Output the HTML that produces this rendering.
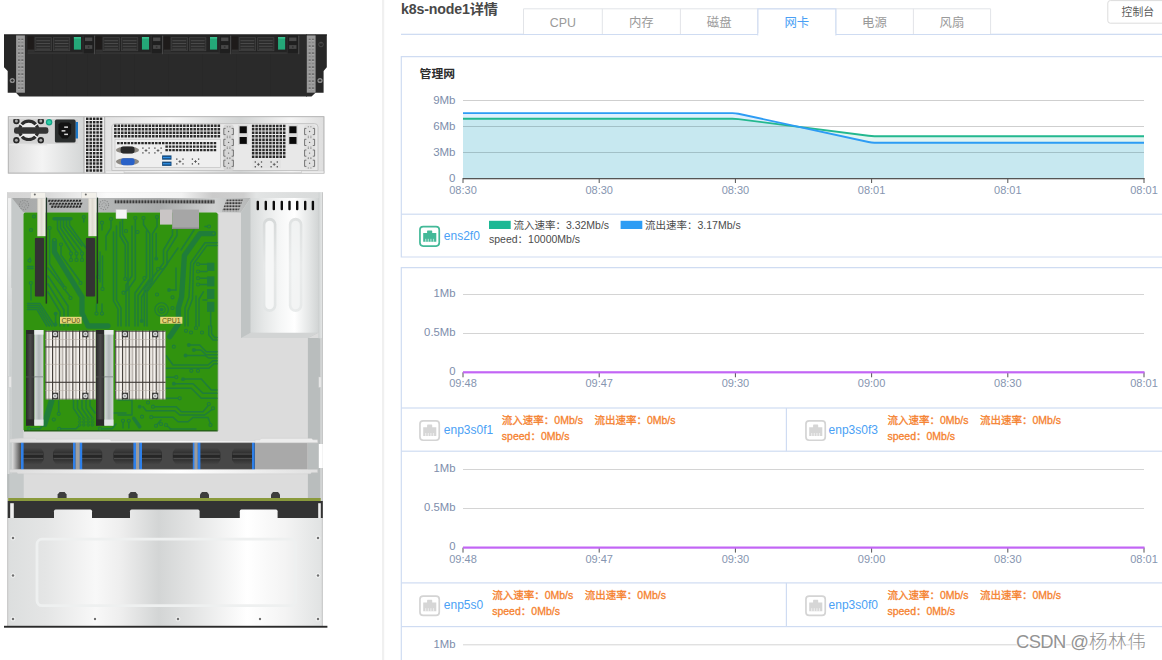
<!DOCTYPE html>
<html lang="zh"><head><meta charset="utf-8"><title>k8s-node1详情</title>
<style>
html,body{margin:0;padding:0;background:#fff}
body{width:1162px;height:660px;overflow:hidden;position:relative;font-family:"Liberation Sans","Noto Sans CJK SC",sans-serif}
.t{position:absolute;white-space:nowrap;line-height:1.2}
.title{font-size:14.2px;font-weight:bold;color:#484848;letter-spacing:-.15px}
.tab{width:78px;text-align:center;font-size:12.4px;color:#9a9a9a;line-height:16px}
.tab.act{color:#4a9ff5}
.btn{font-size:10.8px;color:#5a5a5a;line-height:15px}
.ptitle{font-size:11.8px;font-weight:bold;color:#2c2c2c;line-height:16px}
.nic{font-size:12px;color:#4a9ff5;line-height:16px}
.leg{font-size:10.5px;color:#4c4c4c;line-height:14px}
.org{font-size:10.5px;color:#f5822f;line-height:14px;-webkit-text-stroke:.3px #f5822f}
.wm{font-size:18.4px;font-weight:300;color:#939393;line-height:28px;text-shadow:0 0 1px #fff,0 0 2px #fff,1px 1px 0 #fff,-1px -1px 0 #fff}
</style></head><body>
<svg id="srv" width="384" height="660" viewBox="0 0 384 660" style="position:absolute;left:0;top:0">
<defs>
<linearGradient id="gRear" x1="0" x2="1" y1="0" y2="0"><stop offset="0" stop-color="#dcdcdc"/><stop offset=".45" stop-color="#f4f4f4"/><stop offset="1" stop-color="#d4d6d6"/></linearGradient>
<linearGradient id="gRear2" x1="0" x2="1" y1="0" y2="0"><stop offset="0" stop-color="#e2e2e2"/><stop offset=".3" stop-color="#f6f6f6"/><stop offset=".62" stop-color="#d2d4d4"/><stop offset=".85" stop-color="#f4f4f4"/><stop offset="1" stop-color="#dedede"/></linearGradient>
<linearGradient id="gTopbar" x1="0" x2="1" y1="0" y2="0"><stop offset="0" stop-color="#d4d4d4"/><stop offset=".12" stop-color="#d8d8d8"/><stop offset=".32" stop-color="#fafafa"/><stop offset=".56" stop-color="#f2f2f2"/><stop offset=".66" stop-color="#cacaca"/><stop offset=".76" stop-color="#cecece"/><stop offset=".8" stop-color="#e2e4e4"/><stop offset="1" stop-color="#d8dada"/></linearGradient>
<linearGradient id="gWallL" x1="0" x2="0" y1="0" y2="1"><stop offset="0" stop-color="#f1f1f1"/><stop offset=".2" stop-color="#e6e8e8"/><stop offset=".35" stop-color="#d8dada"/><stop offset=".55" stop-color="#ccd0d0"/><stop offset="1" stop-color="#c6caca"/></linearGradient>
<linearGradient id="gWallR" x1="0" x2="1" y1="0" y2="0"><stop offset="0" stop-color="#cbcfcf"/><stop offset=".7" stop-color="#e2e4e4"/><stop offset="1" stop-color="#d4d6d6"/></linearGradient>
<linearGradient id="gBack" x1="0" x2="1" y1="0" y2="0"><stop offset="0" stop-color="#a4a6a6"/><stop offset=".3" stop-color="#b8baba"/><stop offset=".62" stop-color="#a8aaaa"/><stop offset=".85" stop-color="#cfd1d1"/><stop offset="1" stop-color="#b4b6b6"/></linearGradient>
<linearGradient id="gPsu" x1="0" x2="1" y1="0" y2="0"><stop offset="0" stop-color="#d6d9d9"/><stop offset=".2" stop-color="#e6e8e8"/><stop offset=".45" stop-color="#f6f7f7"/><stop offset=".65" stop-color="#ffffff"/><stop offset=".85" stop-color="#e6e8e8"/><stop offset="1" stop-color="#d2d5d5"/></linearGradient>
<linearGradient id="gCover" gradientUnits="userSpaceOnUse" x1="7.3" x2="322.7" y1="0" y2="0"><stop offset="0" stop-color="#dcdede"/><stop offset=".12" stop-color="#e4e5e5"/><stop offset=".28" stop-color="#f8f8f8"/><stop offset=".36" stop-color="#eeeeee"/><stop offset=".48" stop-color="#d3d5d5"/><stop offset=".58" stop-color="#e2e3e3"/><stop offset=".76" stop-color="#ffffff"/><stop offset=".88" stop-color="#f4f4f4"/><stop offset="1" stop-color="#e0e2e2"/></linearGradient>
<linearGradient id="gFan" x1="0" x2="0" y1="0" y2="1"><stop offset="0" stop-color="#484848"/><stop offset=".5" stop-color="#242424"/><stop offset="1" stop-color="#464646"/></linearGradient>
<linearGradient id="gFanL" x1="0" x2="1" y1="0" y2="0"><stop offset="0" stop-color="#e0e0e0"/><stop offset="1" stop-color="#3a3a3a"/></linearGradient>
<linearGradient id="gRail" x1="0" x2="1" y1="0" y2="0"><stop offset="0" stop-color="#dcdcdc"/><stop offset=".3" stop-color="#f0f0f0"/><stop offset=".55" stop-color="#ffffff"/><stop offset="1" stop-color="#e0e0e0"/></linearGradient>
<linearGradient id="gBrk" x1="0" x2="1" y1="0" y2="0"><stop offset="0" stop-color="#f4f2ea"/><stop offset=".5" stop-color="#dedad0"/><stop offset="1" stop-color="#f4f2ea"/></linearGradient>
<linearGradient id="gDimm" x1="0" x2="1" y1="0" y2="0"><stop offset="0" stop-color="#d8dcdc"/><stop offset=".5" stop-color="#aeb6b6"/><stop offset="1" stop-color="#d0d4d4"/></linearGradient>
<linearGradient id="gDimmB" x1="0" x2="1" y1="0" y2="0"><stop offset="0" stop-color="#2a2a2a"/><stop offset=".5" stop-color="#4a4a4a"/><stop offset="1" stop-color="#2e2e2e"/></linearGradient>
<linearGradient id="gU" x1="0" x2="0" y1="0" y2="1"><stop offset="0" stop-color="#d6d9d9"/><stop offset=".5" stop-color="#e6e8e8"/><stop offset="1" stop-color="#e2e5e5"/></linearGradient>
<pattern id="pVent" width="3.05" height="3.3" patternUnits="userSpaceOnUse"><rect width="3.05" height="3.3" fill="#c8c8c8"/><rect x=".4" y=".5" width="2.2" height="2.2" fill="#2e2e2e"/></pattern>
<pattern id="pVent2" width="2.9" height="3.15" patternUnits="userSpaceOnUse"><rect width="2.9" height="3.15" fill="#d2d2d2"/><rect x=".35" y=".45" width="2.1" height="2.1" fill="#333"/></pattern>
<pattern id="pHole" width="3.4" height="7" patternUnits="userSpaceOnUse" patternTransform="translate(17.1 38.6)"><rect width="3.4" height="7" fill="#9b9b9b"/><rect x=".9" y=".2" width="2" height="1.2" fill="#2e2e2e"/><rect x=".9" y="1.4" width="2" height=".9" fill="#d2d2d2"/><rect x=".9" y="3.3" width="2" height="1.3" fill="#6c6c6c"/><rect x=".9" y="4.6" width="2" height=".6" fill="#b8b8b8"/></pattern><pattern id="pHoleR" width="3.4" height="7" patternUnits="userSpaceOnUse" patternTransform="translate(307.8 38.6)"><rect width="3.4" height="7" fill="#9b9b9b"/><rect x=".9" y=".2" width="2" height="1.2" fill="#2e2e2e"/><rect x=".9" y="1.4" width="2" height=".9" fill="#d2d2d2"/><rect x=".9" y="3.3" width="2" height="1.3" fill="#6c6c6c"/><rect x=".9" y="4.6" width="2" height=".6" fill="#b8b8b8"/></pattern>
<pattern id="pFin" width="6.75" height="10" patternUnits="userSpaceOnUse" patternTransform="translate(45.3 0)"><rect width="6.75" height="10" fill="#f5f2ee"/><rect x="0" y="0" width="1.05" height="10" fill="#3e3a36"/><rect x="1.05" y="0" width=".6" height="10" fill="#d4cec6"/><rect x="3.25" y="0" width="1" height="10" fill="#88827a"/><rect x="4.25" y="0" width=".5" height="10" fill="#dcd6cf"/></pattern><pattern id="pFin2" width="6.75" height="10" patternUnits="userSpaceOnUse" patternTransform="translate(115.2 0)"><rect width="6.75" height="10" fill="#f5f2ee"/><rect x="0" y="0" width="1.05" height="10" fill="#3e3a36"/><rect x="1.05" y="0" width=".6" height="10" fill="#d4cec6"/><rect x="3.25" y="0" width="1" height="10" fill="#88827a"/><rect x="4.25" y="0" width=".5" height="10" fill="#dcd6cf"/></pattern>
<pattern id="pSlot" width="3" height="4" patternUnits="userSpaceOnUse"><rect width="3" height="4" fill="#aaacac"/><rect x=".4" y=".3" width="2" height="3" fill="#3a3a3a"/></pattern>
</defs>
<g id="front">
<path d="M4 34.5H16V92.7H7.7V71L4 67.3Z" fill="#272727"/>
<path d="M326.8 34.5H315V92.7H323.6V71L326.8 67.3Z" fill="#272727"/>
<path d="M24.8 34.5H307V96.4H19.5L16 92.7V34.5Z" fill="#2a2a2a"/>
<path d="M306 34.5H315.5V92.7L311.5 96.4H306Z" fill="#2a2a2a"/>
<rect x="16.1" y="34.6" width="8.8" height="58.1" fill="#9b9b9b" />
<rect x="306.8" y="34.6" width="8.8" height="58.1" fill="#9b9b9b" />
<rect x="17.1" y="38.6" width="6.8" height="52.5" fill="url(#pHole)" />
<rect x="307.8" y="38.6" width="6.8" height="52.5" fill="url(#pHoleR)" />
<rect x="4" y="34.5" width="323" height="0.9" fill="#1c1c1c" />
<circle cx="12.3" cy="80.5" r="2.6" fill="#8a8a8a"/><path d="M10.9 80.5h2.8M12.3 79.1v2.8" stroke="#222" stroke-width=".8"/>
<circle cx="320" cy="80.5" r="2.6" fill="#8a8a8a"/><path d="M318.6 80.5h2.8M320 79.1v2.8" stroke="#222" stroke-width=".8"/>
<circle cx="321" cy="44.5" r="2.3" fill="none" stroke="#555" stroke-width=".7"/><path d="M321 41.8v2.4" stroke="#555" stroke-width=".7"/>
<rect x="52" y="54" width="0.6" height="42" fill="#282828" />
<rect x="66" y="54" width="0.6" height="42" fill="#282828" />
<rect x="87" y="54" width="0.6" height="42" fill="#282828" />
<rect x="100" y="54" width="0.6" height="42" fill="#282828" />
<rect x="120" y="54" width="0.6" height="42" fill="#282828" />
<rect x="134" y="54" width="0.6" height="42" fill="#282828" />
<rect x="168" y="54" width="0.6" height="42" fill="#282828" />
<rect x="202" y="54" width="0.6" height="42" fill="#282828" />
<rect x="236" y="54" width="0.6" height="42" fill="#282828" />
<rect x="270" y="54" width="0.6" height="42" fill="#282828" />
<rect x="27.5" y="35.6" width="66.8" height="18" fill="#232323" />
<rect x="27.5" y="52.4" width="66.8" height="1.3" fill="#3a3a3a" />
<rect x="94.1" y="35.6" width="1" height="18.6" fill="#4c4c4c" />
<rect x="27.5" y="36.4" width="6.2" height="13.6" fill="#1e1b1a" />
<rect x="27.8" y="49.6" width="7" height="2.2" fill="#333" />
<rect x="34.7" y="37.2" width="17" height="14.3" fill="#2b2b2b" />
<rect x="35.1" y="37.6" width="16.2" height="13" fill="none" stroke="#404040" stroke-width=".8"/>
<rect x="36.3" y="40.2" width="13.8" height="1" fill="#4a4a4a" />
<rect x="36.3" y="43" width="13.8" height="1" fill="#4a4a4a" />
<rect x="36.3" y="45.8" width="13.8" height="1" fill="#4a4a4a" />
<rect x="36.3" y="48.6" width="13.8" height="1" fill="#4a4a4a" />
<rect x="53.1" y="37.2" width="17" height="14.3" fill="#2b2b2b" />
<rect x="53.5" y="37.6" width="16.2" height="13" fill="none" stroke="#404040" stroke-width=".8"/>
<rect x="54.7" y="40.2" width="13.8" height="1" fill="#4a4a4a" />
<rect x="54.7" y="43" width="13.8" height="1" fill="#4a4a4a" />
<rect x="54.7" y="45.8" width="13.8" height="1" fill="#4a4a4a" />
<rect x="54.7" y="48.6" width="13.8" height="1" fill="#4a4a4a" />
<rect x="73.9" y="37" width="7.1" height="12.6" fill="#24a878" />
<rect x="73.9" y="37" width="7.1" height="1.6" fill="#3cc090" />
<rect x="83.8" y="35.6" width="9.9" height="17.8" fill="#1f1f1f" />
<rect x="85" y="37.5" width="7.3" height="3.6" fill="#4a4a4a" />
<rect x="85" y="45.1" width="7.3" height="3.8" fill="#484848" />
<rect x="87.8" y="46.4" width="1.6" height="1.2" fill="#2a2a2a" />
<rect x="82.5" y="35.6" width="1.2" height="17.8" fill="#2c2c2c" />
<rect x="95.55" y="35.6" width="66.8" height="18" fill="#232323" />
<rect x="95.55" y="52.4" width="66.8" height="1.3" fill="#3a3a3a" />
<rect x="162.15" y="35.6" width="1" height="18.6" fill="#4c4c4c" />
<rect x="95.55" y="36.4" width="6.2" height="13.6" fill="#1e1b1a" />
<rect x="95.85" y="49.6" width="7" height="2.2" fill="#333" />
<rect x="102.75" y="37.2" width="17" height="14.3" fill="#2b2b2b" />
<rect x="103.15" y="37.6" width="16.2" height="13" fill="none" stroke="#404040" stroke-width=".8"/>
<rect x="104.35" y="40.2" width="13.8" height="1" fill="#4a4a4a" />
<rect x="104.35" y="43" width="13.8" height="1" fill="#4a4a4a" />
<rect x="104.35" y="45.8" width="13.8" height="1" fill="#4a4a4a" />
<rect x="104.35" y="48.6" width="13.8" height="1" fill="#4a4a4a" />
<rect x="121.15" y="37.2" width="17" height="14.3" fill="#2b2b2b" />
<rect x="121.55" y="37.6" width="16.2" height="13" fill="none" stroke="#404040" stroke-width=".8"/>
<rect x="122.75" y="40.2" width="13.8" height="1" fill="#4a4a4a" />
<rect x="122.75" y="43" width="13.8" height="1" fill="#4a4a4a" />
<rect x="122.75" y="45.8" width="13.8" height="1" fill="#4a4a4a" />
<rect x="122.75" y="48.6" width="13.8" height="1" fill="#4a4a4a" />
<rect x="141.95" y="37" width="7.1" height="12.6" fill="#24a878" />
<rect x="141.95" y="37" width="7.1" height="1.6" fill="#3cc090" />
<rect x="151.85" y="35.6" width="9.9" height="17.8" fill="#1f1f1f" />
<rect x="153.05" y="37.5" width="7.3" height="3.6" fill="#4a4a4a" />
<rect x="153.05" y="45.1" width="7.3" height="3.8" fill="#484848" />
<rect x="155.85" y="46.4" width="1.6" height="1.2" fill="#2a2a2a" />
<rect x="150.55" y="35.6" width="1.2" height="17.8" fill="#2c2c2c" />
<rect x="163.6" y="35.6" width="66.8" height="18" fill="#232323" />
<rect x="163.6" y="52.4" width="66.8" height="1.3" fill="#3a3a3a" />
<rect x="230.2" y="35.6" width="1" height="18.6" fill="#4c4c4c" />
<rect x="163.6" y="36.4" width="6.2" height="13.6" fill="#1e1b1a" />
<rect x="163.9" y="49.6" width="7" height="2.2" fill="#333" />
<rect x="170.8" y="37.2" width="17" height="14.3" fill="#2b2b2b" />
<rect x="171.2" y="37.6" width="16.2" height="13" fill="none" stroke="#404040" stroke-width=".8"/>
<rect x="172.4" y="40.2" width="13.8" height="1" fill="#4a4a4a" />
<rect x="172.4" y="43" width="13.8" height="1" fill="#4a4a4a" />
<rect x="172.4" y="45.8" width="13.8" height="1" fill="#4a4a4a" />
<rect x="172.4" y="48.6" width="13.8" height="1" fill="#4a4a4a" />
<rect x="189.2" y="37.2" width="17" height="14.3" fill="#2b2b2b" />
<rect x="189.6" y="37.6" width="16.2" height="13" fill="none" stroke="#404040" stroke-width=".8"/>
<rect x="190.8" y="40.2" width="13.8" height="1" fill="#4a4a4a" />
<rect x="190.8" y="43" width="13.8" height="1" fill="#4a4a4a" />
<rect x="190.8" y="45.8" width="13.8" height="1" fill="#4a4a4a" />
<rect x="190.8" y="48.6" width="13.8" height="1" fill="#4a4a4a" />
<rect x="210" y="37" width="7.1" height="12.6" fill="#24a878" />
<rect x="210" y="37" width="7.1" height="1.6" fill="#3cc090" />
<rect x="219.9" y="35.6" width="9.9" height="17.8" fill="#1f1f1f" />
<rect x="221.1" y="37.5" width="7.3" height="3.6" fill="#4a4a4a" />
<rect x="221.1" y="45.1" width="7.3" height="3.8" fill="#484848" />
<rect x="223.9" y="46.4" width="1.6" height="1.2" fill="#2a2a2a" />
<rect x="218.6" y="35.6" width="1.2" height="17.8" fill="#2c2c2c" />
<rect x="231.65" y="35.6" width="66.8" height="18" fill="#232323" />
<rect x="231.65" y="52.4" width="66.8" height="1.3" fill="#3a3a3a" />
<rect x="298.25" y="35.6" width="1" height="18.6" fill="#4c4c4c" />
<rect x="231.65" y="36.4" width="6.2" height="13.6" fill="#1e1b1a" />
<rect x="231.95" y="49.6" width="7" height="2.2" fill="#333" />
<rect x="238.85" y="37.2" width="17" height="14.3" fill="#2b2b2b" />
<rect x="239.25" y="37.6" width="16.2" height="13" fill="none" stroke="#404040" stroke-width=".8"/>
<rect x="240.45" y="40.2" width="13.8" height="1" fill="#4a4a4a" />
<rect x="240.45" y="43" width="13.8" height="1" fill="#4a4a4a" />
<rect x="240.45" y="45.8" width="13.8" height="1" fill="#4a4a4a" />
<rect x="240.45" y="48.6" width="13.8" height="1" fill="#4a4a4a" />
<rect x="257.25" y="37.2" width="17" height="14.3" fill="#2b2b2b" />
<rect x="257.65" y="37.6" width="16.2" height="13" fill="none" stroke="#404040" stroke-width=".8"/>
<rect x="258.85" y="40.2" width="13.8" height="1" fill="#4a4a4a" />
<rect x="258.85" y="43" width="13.8" height="1" fill="#4a4a4a" />
<rect x="258.85" y="45.8" width="13.8" height="1" fill="#4a4a4a" />
<rect x="258.85" y="48.6" width="13.8" height="1" fill="#4a4a4a" />
<rect x="278.05" y="37" width="7.1" height="12.6" fill="#24a878" />
<rect x="278.05" y="37" width="7.1" height="1.6" fill="#3cc090" />
<rect x="287.95" y="35.6" width="9.9" height="17.8" fill="#1f1f1f" />
<rect x="289.15" y="37.5" width="7.3" height="3.6" fill="#4a4a4a" />
<rect x="289.15" y="45.1" width="7.3" height="3.8" fill="#484848" />
<rect x="291.95" y="46.4" width="1.6" height="1.2" fill="#2a2a2a" />
<rect x="286.65" y="35.6" width="1.2" height="17.8" fill="#2c2c2c" />
</g>
<g id="rear">
<rect x="7.9" y="116.3" width="316.4" height="57.2" fill="#c9c9c9" />
<rect x="8.4" y="116.8" width="75" height="56" fill="url(#gRear)" />
<rect x="84.5" y="116.8" width="19.5" height="56" fill="#ececec" />
<path d="M86.00 117.50h2.5v2.5h-2.5zM89.45 117.50h2.5v2.5h-2.5zM92.90 117.50h2.5v2.5h-2.5zM96.35 117.50h2.5v2.5h-2.5zM99.80 117.50h2.5v2.5h-2.5zM86.00 120.95h2.5v2.5h-2.5zM89.45 120.95h2.5v2.5h-2.5zM92.90 120.95h2.5v2.5h-2.5zM96.35 120.95h2.5v2.5h-2.5zM99.80 120.95h2.5v2.5h-2.5zM86.00 124.40h2.5v2.5h-2.5zM89.45 124.40h2.5v2.5h-2.5zM92.90 124.40h2.5v2.5h-2.5zM96.35 124.40h2.5v2.5h-2.5zM99.80 124.40h2.5v2.5h-2.5zM86.00 127.85h2.5v2.5h-2.5zM89.45 127.85h2.5v2.5h-2.5zM92.90 127.85h2.5v2.5h-2.5zM96.35 127.85h2.5v2.5h-2.5zM99.80 127.85h2.5v2.5h-2.5zM86.00 131.30h2.5v2.5h-2.5zM89.45 131.30h2.5v2.5h-2.5zM92.90 131.30h2.5v2.5h-2.5zM96.35 131.30h2.5v2.5h-2.5zM99.80 131.30h2.5v2.5h-2.5zM86.00 134.75h2.5v2.5h-2.5zM89.45 134.75h2.5v2.5h-2.5zM92.90 134.75h2.5v2.5h-2.5zM96.35 134.75h2.5v2.5h-2.5zM99.80 134.75h2.5v2.5h-2.5zM86.00 138.20h2.5v2.5h-2.5zM89.45 138.20h2.5v2.5h-2.5zM92.90 138.20h2.5v2.5h-2.5zM96.35 138.20h2.5v2.5h-2.5zM99.80 138.20h2.5v2.5h-2.5zM86.00 141.65h2.5v2.5h-2.5zM89.45 141.65h2.5v2.5h-2.5zM92.90 141.65h2.5v2.5h-2.5zM96.35 141.65h2.5v2.5h-2.5zM99.80 141.65h2.5v2.5h-2.5zM86.00 145.10h2.5v2.5h-2.5zM89.45 145.10h2.5v2.5h-2.5zM92.90 145.10h2.5v2.5h-2.5zM96.35 145.10h2.5v2.5h-2.5zM99.80 145.10h2.5v2.5h-2.5zM86.00 148.55h2.5v2.5h-2.5zM89.45 148.55h2.5v2.5h-2.5zM92.90 148.55h2.5v2.5h-2.5zM96.35 148.55h2.5v2.5h-2.5zM99.80 148.55h2.5v2.5h-2.5zM86.00 152.00h2.5v2.5h-2.5zM89.45 152.00h2.5v2.5h-2.5zM92.90 152.00h2.5v2.5h-2.5zM96.35 152.00h2.5v2.5h-2.5zM99.80 152.00h2.5v2.5h-2.5zM86.00 155.45h2.5v2.5h-2.5zM89.45 155.45h2.5v2.5h-2.5zM92.90 155.45h2.5v2.5h-2.5zM96.35 155.45h2.5v2.5h-2.5zM99.80 155.45h2.5v2.5h-2.5zM86.00 158.90h2.5v2.5h-2.5zM89.45 158.90h2.5v2.5h-2.5zM92.90 158.90h2.5v2.5h-2.5zM96.35 158.90h2.5v2.5h-2.5zM99.80 158.90h2.5v2.5h-2.5zM86.00 162.35h2.5v2.5h-2.5zM89.45 162.35h2.5v2.5h-2.5zM92.90 162.35h2.5v2.5h-2.5zM96.35 162.35h2.5v2.5h-2.5zM99.80 162.35h2.5v2.5h-2.5zM86.00 165.80h2.5v2.5h-2.5zM89.45 165.80h2.5v2.5h-2.5zM92.90 165.80h2.5v2.5h-2.5zM96.35 165.80h2.5v2.5h-2.5zM99.80 165.80h2.5v2.5h-2.5zM86.00 169.25h2.5v2.5h-2.5zM89.45 169.25h2.5v2.5h-2.5zM92.90 169.25h2.5v2.5h-2.5zM96.35 169.25h2.5v2.5h-2.5zM99.80 169.25h2.5v2.5h-2.5z" fill="#262626"/>
<rect x="105" y="116.8" width="218.8" height="56" fill="url(#gRear2)" />
<rect x="8.3" y="116.7" width="315.6" height="56.4" fill="none" stroke="#b4b4b4" stroke-width=".9"/>
<rect x="83.3" y="116.5" width="1.2" height="56.6" fill="#b8b8b8" />
<rect x="104" y="116.5" width="1.2" height="56.6" fill="#b8b8b8" />
<rect x="9.3" y="118.9" width="68.5" height="24.9" fill="#d3d3d3" />
<circle cx="28.7" cy="130.3" r="9.2" fill="#ececec" stroke="#2c2c2c" stroke-width="3.1"/>
<path d="M16.4 121L41 140.2M41 121L16.4 140.2" stroke="#f4f4f4" stroke-width="1.2"/>
<circle cx="16.4" cy="121" r="3.2" fill="#262626"/><circle cx="16.4" cy="121" r="1.5" fill="#a8a8a8"/>
<circle cx="40.8" cy="121" r="3.2" fill="#262626"/><circle cx="40.8" cy="121" r="1.5" fill="#a8a8a8"/>
<circle cx="16.4" cy="140.2" r="3.2" fill="#262626"/><circle cx="16.4" cy="140.2" r="1.5" fill="#a8a8a8"/>
<circle cx="40.8" cy="140.2" r="3.2" fill="#262626"/><circle cx="40.8" cy="140.2" r="1.5" fill="#a8a8a8"/>
<rect x="9.3" y="116.9" width="38" height="2.2" fill="#e2e2e2" />
<rect x="9.3" y="143.8" width="38" height="1.6" fill="#e6e6e6" />
<rect x="14" y="127.3" width="34.4" height="6.5" rx="2.4" fill="#333"/>
<circle cx="49.1" cy="122.3" r="3.2" fill="#12a084"/><circle cx="49.1" cy="122.3" r="2" fill="#2ecfa6"/>
<rect x="75.4" y="122" width="2.6" height="16.5" fill="#1c78c8" />
<rect x="54.9" y="119.6" width="20.7" height="23" rx="1.6" fill="#2a2d2d"/>
<path d="M60.5 122.4h8.6l2 2v9.6l-3.6 4.6h-5.4l-3.6-4.6v-9.6z" fill="#131313"/>
<rect x="64.2" y="126.4" width="3.8" height="1.5" fill="#d8d8d8" />
<rect x="61.6" y="130.1" width="3.8" height="1.5" fill="#d8d8d8" />
<rect x="64.2" y="133.6" width="3.8" height="1.5" fill="#d8d8d8" />
<path d="M116 123.6H314.5q3.5 0 3.5 3.5V170.5H111.8V127.6q0-4 4.2-4Z" fill="#e8e8e8" stroke="#bdbdbd" stroke-width=".8"/>
<path d="M105.6 173.2V171H124V173.2ZM301.5 173.2V171H323.8V173.2Z" fill="#f2f2f2" stroke="#c4c4c4" stroke-width=".5"/>
<path d="M114.10 124.50h2.5v2.5h-2.5zM117.55 124.50h2.5v2.5h-2.5zM121.00 124.50h2.5v2.5h-2.5zM124.45 124.50h2.5v2.5h-2.5zM127.90 124.50h2.5v2.5h-2.5zM131.35 124.50h2.5v2.5h-2.5zM134.80 124.50h2.5v2.5h-2.5zM138.25 124.50h2.5v2.5h-2.5zM141.70 124.50h2.5v2.5h-2.5zM145.15 124.50h2.5v2.5h-2.5zM148.60 124.50h2.5v2.5h-2.5zM152.05 124.50h2.5v2.5h-2.5zM155.50 124.50h2.5v2.5h-2.5zM158.95 124.50h2.5v2.5h-2.5zM162.40 124.50h2.5v2.5h-2.5zM165.85 124.50h2.5v2.5h-2.5zM169.30 124.50h2.5v2.5h-2.5zM172.75 124.50h2.5v2.5h-2.5zM176.20 124.50h2.5v2.5h-2.5zM179.65 124.50h2.5v2.5h-2.5zM183.10 124.50h2.5v2.5h-2.5zM186.55 124.50h2.5v2.5h-2.5zM190.00 124.50h2.5v2.5h-2.5zM193.45 124.50h2.5v2.5h-2.5zM196.90 124.50h2.5v2.5h-2.5zM200.35 124.50h2.5v2.5h-2.5zM203.80 124.50h2.5v2.5h-2.5zM207.25 124.50h2.5v2.5h-2.5zM210.70 124.50h2.5v2.5h-2.5zM214.15 124.50h2.5v2.5h-2.5zM217.60 124.50h2.5v2.5h-2.5zM114.10 128.00h2.5v2.5h-2.5zM117.55 128.00h2.5v2.5h-2.5zM121.00 128.00h2.5v2.5h-2.5zM124.45 128.00h2.5v2.5h-2.5zM127.90 128.00h2.5v2.5h-2.5zM131.35 128.00h2.5v2.5h-2.5zM134.80 128.00h2.5v2.5h-2.5zM138.25 128.00h2.5v2.5h-2.5zM141.70 128.00h2.5v2.5h-2.5zM145.15 128.00h2.5v2.5h-2.5zM148.60 128.00h2.5v2.5h-2.5zM152.05 128.00h2.5v2.5h-2.5zM155.50 128.00h2.5v2.5h-2.5zM158.95 128.00h2.5v2.5h-2.5zM162.40 128.00h2.5v2.5h-2.5zM165.85 128.00h2.5v2.5h-2.5zM169.30 128.00h2.5v2.5h-2.5zM172.75 128.00h2.5v2.5h-2.5zM176.20 128.00h2.5v2.5h-2.5zM179.65 128.00h2.5v2.5h-2.5zM183.10 128.00h2.5v2.5h-2.5zM186.55 128.00h2.5v2.5h-2.5zM190.00 128.00h2.5v2.5h-2.5zM193.45 128.00h2.5v2.5h-2.5zM196.90 128.00h2.5v2.5h-2.5zM200.35 128.00h2.5v2.5h-2.5zM203.80 128.00h2.5v2.5h-2.5zM207.25 128.00h2.5v2.5h-2.5zM210.70 128.00h2.5v2.5h-2.5zM214.15 128.00h2.5v2.5h-2.5zM217.60 128.00h2.5v2.5h-2.5zM114.10 131.50h2.5v2.5h-2.5zM117.55 131.50h2.5v2.5h-2.5zM121.00 131.50h2.5v2.5h-2.5zM124.45 131.50h2.5v2.5h-2.5zM127.90 131.50h2.5v2.5h-2.5zM131.35 131.50h2.5v2.5h-2.5zM134.80 131.50h2.5v2.5h-2.5zM138.25 131.50h2.5v2.5h-2.5zM141.70 131.50h2.5v2.5h-2.5zM145.15 131.50h2.5v2.5h-2.5zM148.60 131.50h2.5v2.5h-2.5zM152.05 131.50h2.5v2.5h-2.5zM155.50 131.50h2.5v2.5h-2.5zM158.95 131.50h2.5v2.5h-2.5zM162.40 131.50h2.5v2.5h-2.5zM165.85 131.50h2.5v2.5h-2.5zM169.30 131.50h2.5v2.5h-2.5zM172.75 131.50h2.5v2.5h-2.5zM176.20 131.50h2.5v2.5h-2.5zM179.65 131.50h2.5v2.5h-2.5zM183.10 131.50h2.5v2.5h-2.5zM186.55 131.50h2.5v2.5h-2.5zM190.00 131.50h2.5v2.5h-2.5zM193.45 131.50h2.5v2.5h-2.5zM196.90 131.50h2.5v2.5h-2.5zM200.35 131.50h2.5v2.5h-2.5zM203.80 131.50h2.5v2.5h-2.5zM207.25 131.50h2.5v2.5h-2.5zM210.70 131.50h2.5v2.5h-2.5zM214.15 131.50h2.5v2.5h-2.5zM217.60 131.50h2.5v2.5h-2.5zM114.10 135.00h2.5v2.5h-2.5zM117.55 135.00h2.5v2.5h-2.5zM121.00 135.00h2.5v2.5h-2.5zM124.45 135.00h2.5v2.5h-2.5zM127.90 135.00h2.5v2.5h-2.5zM131.35 135.00h2.5v2.5h-2.5zM134.80 135.00h2.5v2.5h-2.5zM138.25 135.00h2.5v2.5h-2.5zM141.70 135.00h2.5v2.5h-2.5zM145.15 135.00h2.5v2.5h-2.5zM148.60 135.00h2.5v2.5h-2.5zM152.05 135.00h2.5v2.5h-2.5zM155.50 135.00h2.5v2.5h-2.5zM158.95 135.00h2.5v2.5h-2.5zM162.40 135.00h2.5v2.5h-2.5zM165.85 135.00h2.5v2.5h-2.5zM169.30 135.00h2.5v2.5h-2.5zM172.75 135.00h2.5v2.5h-2.5zM176.20 135.00h2.5v2.5h-2.5zM179.65 135.00h2.5v2.5h-2.5zM183.10 135.00h2.5v2.5h-2.5zM186.55 135.00h2.5v2.5h-2.5zM190.00 135.00h2.5v2.5h-2.5zM193.45 135.00h2.5v2.5h-2.5zM196.90 135.00h2.5v2.5h-2.5zM200.35 135.00h2.5v2.5h-2.5zM203.80 135.00h2.5v2.5h-2.5zM207.25 135.00h2.5v2.5h-2.5zM210.70 135.00h2.5v2.5h-2.5zM214.15 135.00h2.5v2.5h-2.5zM217.60 135.00h2.5v2.5h-2.5z" fill="#2a2a2a"/>
<rect x="115" y="139.3" width="105.4" height="28.2" fill="#efefef" stroke="#c2c2c2" stroke-width=".7"/>
<path d="M117.10 141.90h2.5v2.4h-2.5zM120.55 141.90h2.5v2.4h-2.5zM124.00 141.90h2.5v2.4h-2.5zM127.45 141.90h2.5v2.4h-2.5zM130.90 141.90h2.5v2.4h-2.5zM134.35 141.90h2.5v2.4h-2.5zM137.80 141.90h2.5v2.4h-2.5zM141.25 141.90h2.5v2.4h-2.5zM144.70 141.90h2.5v2.4h-2.5zM148.15 141.90h2.5v2.4h-2.5zM151.60 141.90h2.5v2.4h-2.5zM155.05 141.90h2.5v2.4h-2.5zM158.50 141.90h2.5v2.4h-2.5zM161.95 141.90h2.5v2.4h-2.5zM165.40 141.90h2.5v2.4h-2.5zM168.85 141.90h2.5v2.4h-2.5zM172.30 141.90h2.5v2.4h-2.5zM175.75 141.90h2.5v2.4h-2.5zM179.20 141.90h2.5v2.4h-2.5zM182.65 141.90h2.5v2.4h-2.5zM186.10 141.90h2.5v2.4h-2.5zM189.55 141.90h2.5v2.4h-2.5zM193.00 141.90h2.5v2.4h-2.5zM196.45 141.90h2.5v2.4h-2.5zM199.90 141.90h2.5v2.4h-2.5zM203.35 141.90h2.5v2.4h-2.5zM206.80 141.90h2.5v2.4h-2.5zM210.25 141.90h2.5v2.4h-2.5zM213.70 141.90h2.5v2.4h-2.5z" fill="#2a2a2a"/>
<path d="M165.40 145.40h2.5v2.4h-2.5zM168.85 145.40h2.5v2.4h-2.5zM172.30 145.40h2.5v2.4h-2.5zM175.75 145.40h2.5v2.4h-2.5zM179.20 145.40h2.5v2.4h-2.5zM182.65 145.40h2.5v2.4h-2.5zM186.10 145.40h2.5v2.4h-2.5zM189.55 145.40h2.5v2.4h-2.5zM193.00 145.40h2.5v2.4h-2.5zM196.45 145.40h2.5v2.4h-2.5zM199.90 145.40h2.5v2.4h-2.5zM203.35 145.40h2.5v2.4h-2.5zM206.80 145.40h2.5v2.4h-2.5zM210.25 145.40h2.5v2.4h-2.5zM213.70 145.40h2.5v2.4h-2.5zM165.40 148.90h2.5v2.4h-2.5zM168.85 148.90h2.5v2.4h-2.5zM172.30 148.90h2.5v2.4h-2.5zM175.75 148.90h2.5v2.4h-2.5zM179.20 148.90h2.5v2.4h-2.5zM182.65 148.90h2.5v2.4h-2.5zM186.10 148.90h2.5v2.4h-2.5zM189.55 148.90h2.5v2.4h-2.5zM193.00 148.90h2.5v2.4h-2.5zM196.45 148.90h2.5v2.4h-2.5zM199.90 148.90h2.5v2.4h-2.5zM203.35 148.90h2.5v2.4h-2.5zM206.80 148.90h2.5v2.4h-2.5zM210.25 148.90h2.5v2.4h-2.5zM213.70 148.90h2.5v2.4h-2.5z" fill="#2a2a2a"/>
<ellipse cx="127.5" cy="150" rx="11.6" ry="3.6" fill="#8e8a84"/><rect x="120.6" y="146.6" width="14" height="6.8" rx="2.4" fill="#2a2a2a"/>
<ellipse cx="127.5" cy="161.6" rx="11.6" ry="3.6" fill="#8e8a84"/><rect x="121" y="158.2" width="13.6" height="7" rx="2.4" fill="#2a62c8"/>
<rect x="162.1" y="155.4" width="9.4" height="4.3" fill="#134a7e" />
<rect x="162.1" y="161.6" width="9.4" height="4.3" fill="#134a7e" />
<rect x="163" y="156.9" width="7.6" height="1.3" fill="#2f8fe6" />
<rect x="163" y="163.1" width="7.6" height="1.3" fill="#2f8fe6" />
<rect x="142.25" y="147.5" width="1.3" height="1.2" fill="#3a3a3a" /><rect x="148.45" y="147.5" width="1.3" height="1.2" fill="#3a3a3a" /><rect x="142.25" y="152.3" width="1.3" height="1.2" fill="#3a3a3a" /><rect x="148.45" y="152.3" width="1.3" height="1.2" fill="#3a3a3a" /><path d="M144.6 150.5h2.8M146 149v3" stroke="#444" stroke-width=".7"/>
<rect x="154.25" y="147.5" width="1.3" height="1.2" fill="#3a3a3a" /><rect x="160.45" y="147.5" width="1.3" height="1.2" fill="#3a3a3a" /><rect x="154.25" y="152.3" width="1.3" height="1.2" fill="#3a3a3a" /><rect x="160.45" y="152.3" width="1.3" height="1.2" fill="#3a3a3a" /><path d="M156.6 150.5h2.8M158 149v3" stroke="#444" stroke-width=".7"/>
<rect x="176.15" y="158.5" width="1.3" height="1.2" fill="#3a3a3a" /><rect x="182.35" y="158.5" width="1.3" height="1.2" fill="#3a3a3a" /><rect x="176.15" y="163.3" width="1.3" height="1.2" fill="#3a3a3a" /><rect x="182.35" y="163.3" width="1.3" height="1.2" fill="#3a3a3a" /><path d="M178.5 161.5h2.8M179.9 160v3" stroke="#444" stroke-width=".7"/>
<rect x="191.75" y="158.5" width="1.3" height="1.2" fill="#3a3a3a" /><rect x="197.95" y="158.5" width="1.3" height="1.2" fill="#3a3a3a" /><rect x="191.75" y="163.3" width="1.3" height="1.2" fill="#3a3a3a" /><rect x="197.95" y="163.3" width="1.3" height="1.2" fill="#3a3a3a" /><path d="M194.1 161.5h2.8M195.5 160v3" stroke="#444" stroke-width=".7"/>
<rect x="223.4" y="124.4" width="10.6" height="46.4" rx="3.4" fill="#d6d6d6"/>
<rect x="304" y="124.4" width="11.2" height="44.6" rx="3.4" fill="#e0e0e0"/>
<rect x="238" y="125" width="10.2" height="20" fill="#dadada"/><rect x="288" y="125" width="10" height="20" fill="#dadada"/>
<path d="M225.6 128.4H223.8V134.6H225.6M231.6 128.4H233.4V134.6H231.6" fill="none" stroke="#5a5a5a" stroke-width=".8"/><circle cx="228.6" cy="131.5" r=".7" fill="#6a6a6a"/><path d="M226.8 126.8h1M229.4 126.8h1M226.8 136.2h1M229.4 136.2h1" stroke="#777" stroke-width=".9"/>
<path d="M225.6 139.3H223.8V145.5H225.6M231.6 139.3H233.4V145.5H231.6" fill="none" stroke="#5a5a5a" stroke-width=".8"/><circle cx="228.6" cy="142.4" r=".7" fill="#6a6a6a"/><path d="M226.8 137.7h1M229.4 137.7h1M226.8 147.1h1M229.4 147.1h1" stroke="#777" stroke-width=".9"/>
<path d="M225.6 150H223.8V156.2H225.6M231.6 150H233.4V156.2H231.6" fill="none" stroke="#5a5a5a" stroke-width=".8"/><circle cx="228.6" cy="153.1" r=".7" fill="#6a6a6a"/><path d="M226.8 148.4h1M229.4 148.4h1M226.8 157.8h1M229.4 157.8h1" stroke="#777" stroke-width=".9"/>
<path d="M225.6 160.2H223.8V166.4H225.6M231.6 160.2H233.4V166.4H231.6" fill="none" stroke="#5a5a5a" stroke-width=".8"/><circle cx="228.6" cy="163.3" r=".7" fill="#6a6a6a"/><path d="M226.8 158.6h1M229.4 158.6h1M226.8 168h1M229.4 168h1" stroke="#777" stroke-width=".9"/>
<path d="M306.4 128.4H304.6V134.6H306.4M312.8 128.4H314.6V134.6H312.8" fill="none" stroke="#5a5a5a" stroke-width=".8"/><circle cx="309.6" cy="131.5" r=".7" fill="#6a6a6a"/><path d="M307.8 126.8h1M310.4 126.8h1M307.8 136.2h1M310.4 136.2h1" stroke="#777" stroke-width=".9"/>
<path d="M306.4 139.3H304.6V145.5H306.4M312.8 139.3H314.6V145.5H312.8" fill="none" stroke="#5a5a5a" stroke-width=".8"/><circle cx="309.6" cy="142.4" r=".7" fill="#6a6a6a"/><path d="M307.8 137.7h1M310.4 137.7h1M307.8 147.1h1M310.4 147.1h1" stroke="#777" stroke-width=".9"/>
<path d="M306.4 150H304.6V156.2H306.4M312.8 150H314.6V156.2H312.8" fill="none" stroke="#5a5a5a" stroke-width=".8"/><circle cx="309.6" cy="153.1" r=".7" fill="#6a6a6a"/><path d="M307.8 148.4h1M310.4 148.4h1M307.8 157.8h1M310.4 157.8h1" stroke="#777" stroke-width=".9"/>
<path d="M306.4 160.2H304.6V166.4H306.4M312.8 160.2H314.6V166.4H312.8" fill="none" stroke="#5a5a5a" stroke-width=".8"/><circle cx="309.6" cy="163.3" r=".7" fill="#6a6a6a"/><path d="M307.8 158.6h1M310.4 158.6h1M307.8 168h1M310.4 168h1" stroke="#777" stroke-width=".9"/>
<rect x="239.6" y="126.3" width="7.2" height="6.9" fill="#0a0a0a" />
<rect x="239.6" y="137" width="7.2" height="6.9" fill="#0a0a0a" />
<rect x="238.8" y="125.2" width="9.8" height="19.8" fill="none" stroke="#f6f6f6" stroke-width="0"/>
<rect x="289.3" y="126.3" width="7.2" height="6.9" fill="#0a0a0a" />
<rect x="289.3" y="137" width="7.2" height="6.9" fill="#0a0a0a" />
<rect x="288.5" y="125.2" width="9.8" height="19.8" fill="none" stroke="#f6f6f6" stroke-width="0"/>
<path d="M251.90 124.70h2.5v2.5h-2.5zM255.35 124.70h2.5v2.5h-2.5zM258.80 124.70h2.5v2.5h-2.5zM262.25 124.70h2.5v2.5h-2.5zM265.70 124.70h2.5v2.5h-2.5zM269.15 124.70h2.5v2.5h-2.5zM272.60 124.70h2.5v2.5h-2.5zM276.05 124.70h2.5v2.5h-2.5zM279.50 124.70h2.5v2.5h-2.5zM282.95 124.70h2.5v2.5h-2.5zM251.90 128.12h2.5v2.5h-2.5zM255.35 128.12h2.5v2.5h-2.5zM258.80 128.12h2.5v2.5h-2.5zM262.25 128.12h2.5v2.5h-2.5zM265.70 128.12h2.5v2.5h-2.5zM269.15 128.12h2.5v2.5h-2.5zM272.60 128.12h2.5v2.5h-2.5zM276.05 128.12h2.5v2.5h-2.5zM279.50 128.12h2.5v2.5h-2.5zM282.95 128.12h2.5v2.5h-2.5zM251.90 131.54h2.5v2.5h-2.5zM255.35 131.54h2.5v2.5h-2.5zM258.80 131.54h2.5v2.5h-2.5zM262.25 131.54h2.5v2.5h-2.5zM265.70 131.54h2.5v2.5h-2.5zM269.15 131.54h2.5v2.5h-2.5zM272.60 131.54h2.5v2.5h-2.5zM276.05 131.54h2.5v2.5h-2.5zM279.50 131.54h2.5v2.5h-2.5zM282.95 131.54h2.5v2.5h-2.5zM251.90 134.96h2.5v2.5h-2.5zM255.35 134.96h2.5v2.5h-2.5zM258.80 134.96h2.5v2.5h-2.5zM262.25 134.96h2.5v2.5h-2.5zM265.70 134.96h2.5v2.5h-2.5zM269.15 134.96h2.5v2.5h-2.5zM272.60 134.96h2.5v2.5h-2.5zM276.05 134.96h2.5v2.5h-2.5zM279.50 134.96h2.5v2.5h-2.5zM282.95 134.96h2.5v2.5h-2.5zM251.90 138.38h2.5v2.5h-2.5zM255.35 138.38h2.5v2.5h-2.5zM258.80 138.38h2.5v2.5h-2.5zM262.25 138.38h2.5v2.5h-2.5zM265.70 138.38h2.5v2.5h-2.5zM269.15 138.38h2.5v2.5h-2.5zM272.60 138.38h2.5v2.5h-2.5zM276.05 138.38h2.5v2.5h-2.5zM279.50 138.38h2.5v2.5h-2.5zM282.95 138.38h2.5v2.5h-2.5zM251.90 141.80h2.5v2.5h-2.5zM255.35 141.80h2.5v2.5h-2.5zM258.80 141.80h2.5v2.5h-2.5zM262.25 141.80h2.5v2.5h-2.5zM265.70 141.80h2.5v2.5h-2.5zM269.15 141.80h2.5v2.5h-2.5zM272.60 141.80h2.5v2.5h-2.5zM276.05 141.80h2.5v2.5h-2.5zM279.50 141.80h2.5v2.5h-2.5zM282.95 141.80h2.5v2.5h-2.5zM251.90 145.22h2.5v2.5h-2.5zM255.35 145.22h2.5v2.5h-2.5zM258.80 145.22h2.5v2.5h-2.5zM262.25 145.22h2.5v2.5h-2.5zM265.70 145.22h2.5v2.5h-2.5zM269.15 145.22h2.5v2.5h-2.5zM272.60 145.22h2.5v2.5h-2.5zM276.05 145.22h2.5v2.5h-2.5zM279.50 145.22h2.5v2.5h-2.5zM282.95 145.22h2.5v2.5h-2.5zM251.90 148.64h2.5v2.5h-2.5zM255.35 148.64h2.5v2.5h-2.5zM258.80 148.64h2.5v2.5h-2.5zM262.25 148.64h2.5v2.5h-2.5zM265.70 148.64h2.5v2.5h-2.5zM269.15 148.64h2.5v2.5h-2.5zM272.60 148.64h2.5v2.5h-2.5zM276.05 148.64h2.5v2.5h-2.5zM279.50 148.64h2.5v2.5h-2.5zM282.95 148.64h2.5v2.5h-2.5zM251.90 152.06h2.5v2.5h-2.5zM255.35 152.06h2.5v2.5h-2.5zM258.80 152.06h2.5v2.5h-2.5zM262.25 152.06h2.5v2.5h-2.5zM265.70 152.06h2.5v2.5h-2.5zM269.15 152.06h2.5v2.5h-2.5zM272.60 152.06h2.5v2.5h-2.5zM276.05 152.06h2.5v2.5h-2.5zM279.50 152.06h2.5v2.5h-2.5zM282.95 152.06h2.5v2.5h-2.5zM251.90 155.48h2.5v2.5h-2.5zM255.35 155.48h2.5v2.5h-2.5zM258.80 155.48h2.5v2.5h-2.5zM262.25 155.48h2.5v2.5h-2.5zM265.70 155.48h2.5v2.5h-2.5zM269.15 155.48h2.5v2.5h-2.5zM272.60 155.48h2.5v2.5h-2.5zM276.05 155.48h2.5v2.5h-2.5zM279.50 155.48h2.5v2.5h-2.5zM282.95 155.48h2.5v2.5h-2.5z" fill="#2a2a2a"/>
<rect x="252.4" y="160.1" width="28.6" height="8.1" fill="#e3e3e3"/>
<rect x="254.65" y="161.4" width="1.3" height="1.2" fill="#3a3a3a" /><rect x="260.85" y="161.4" width="1.3" height="1.2" fill="#3a3a3a" /><rect x="254.65" y="166.2" width="1.3" height="1.2" fill="#3a3a3a" /><rect x="260.85" y="166.2" width="1.3" height="1.2" fill="#3a3a3a" /><path d="M257 164.4h2.8M258.4 162.9v3" stroke="#444" stroke-width=".7"/>
<rect x="270.45" y="161.4" width="1.3" height="1.2" fill="#3a3a3a" /><rect x="276.65" y="161.4" width="1.3" height="1.2" fill="#3a3a3a" /><rect x="270.45" y="166.2" width="1.3" height="1.2" fill="#3a3a3a" /><rect x="276.65" y="166.2" width="1.3" height="1.2" fill="#3a3a3a" /><path d="M272.8 164.4h2.8M274.2 162.9v3" stroke="#444" stroke-width=".7"/>
</g>
<g id="top">
<rect x="7.3" y="192.3" width="315.4" height="434" fill="#dcdcdc" />
<rect x="11.4" y="198" width="12.1" height="320" fill="#c5c9c9" />
<rect x="7.3" y="192.3" width="4.4" height="326" fill="url(#gWallL)" />
<rect x="7.5" y="300" width="1.9" height="218" fill="#d8dada" />
<rect x="7.1" y="192.3" width="0.7" height="326" fill="#c6c8c8" />
<rect x="11" y="198" width="0.6" height="90" fill="#b8bcbc" opacity=".7"/>
<rect x="307.9" y="338" width="12.6" height="180" fill="#b9bdbd" />
<rect x="318.4" y="192.3" width="4.2" height="146" fill="url(#gWallR)" />
<rect x="320.5" y="338" width="2" height="180" fill="#d2d4d4" />
<rect x="322.1" y="192.3" width="0.7" height="326" fill="#bcbebe" />
<rect x="8.7" y="376.4" width="2.8" height="10.9" fill="#e6e6e6" stroke="#c8caca" stroke-width=".4"/>
<rect x="318.8" y="377" width="2.7" height="10.3" fill="#e6e6e6" stroke="#c8caca" stroke-width=".4"/>
<rect x="318.8" y="444" width="4" height="24" fill="#ffffff" />
<rect x="7.3" y="192.3" width="311" height="5.8" fill="url(#gTopbar)" />
<path d="M12.1 198H250.5L241 212.6H23.5Z" fill="url(#gBack)"/>
<path d="M48.60 199.7h2.2l-.7 2.1h-2.2zM51.65 199.7h2.2l-.7 2.1h-2.2zM54.70 199.7h2.2l-.7 2.1h-2.2zM57.75 199.7h2.2l-.7 2.1h-2.2zM60.80 199.7h2.2l-.7 2.1h-2.2zM63.85 199.7h2.2l-.7 2.1h-2.2zM66.90 199.7h2.2l-.7 2.1h-2.2zM69.95 199.7h2.2l-.7 2.1h-2.2zM73.00 199.7h2.2l-.7 2.1h-2.2zM76.05 199.7h2.2l-.7 2.1h-2.2zM79.10 199.7h2.2l-.7 2.1h-2.2zM49.80 202.7h2.2l-.7 2.1h-2.2zM52.85 202.7h2.2l-.7 2.1h-2.2zM55.90 202.7h2.2l-.7 2.1h-2.2zM58.95 202.7h2.2l-.7 2.1h-2.2zM62.00 202.7h2.2l-.7 2.1h-2.2zM65.05 202.7h2.2l-.7 2.1h-2.2zM68.10 202.7h2.2l-.7 2.1h-2.2zM71.15 202.7h2.2l-.7 2.1h-2.2zM74.20 202.7h2.2l-.7 2.1h-2.2zM77.25 202.7h2.2l-.7 2.1h-2.2zM80.30 202.7h2.2l-.7 2.1h-2.2zM51.60 205.6h2.2l-.7 2.1h-2.2zM54.65 205.6h2.2l-.7 2.1h-2.2zM57.70 205.6h2.2l-.7 2.1h-2.2zM60.75 205.6h2.2l-.7 2.1h-2.2zM63.80 205.6h2.2l-.7 2.1h-2.2zM66.85 205.6h2.2l-.7 2.1h-2.2zM69.90 205.6h2.2l-.7 2.1h-2.2zM72.95 205.6h2.2l-.7 2.1h-2.2zM76.00 205.6h2.2l-.7 2.1h-2.2zM79.05 205.6h2.2l-.7 2.1h-2.2z" fill="#2a2a2a"/>
<rect x="114.5" y="199.6" width="100" height="4.4" fill="url(#pSlot)" />
<path d="M226.5 199.4H243L238.5 211.6H222Z" fill="url(#pVent2)"/>
<circle cx="24" cy="205" r="4.6" fill="none" stroke="#8a8c8c" stroke-width="1.1" stroke-dasharray="1.1 1.3"/><circle cx="24" cy="205" r="2.2" fill="none" stroke="#8a8c8c" stroke-width="1" stroke-dasharray="1 1.2"/>
<circle cx="104" cy="205" r="4.6" fill="none" stroke="#8a8c8c" stroke-width="1.1" stroke-dasharray="1.1 1.3"/><circle cx="104" cy="205" r="2.2" fill="none" stroke="#8a8c8c" stroke-width="1" stroke-dasharray="1 1.2"/>
<rect x="23.5" y="212.6" width="194.2" height="218.4" rx="1.8" fill="#31930f"/>
<rect x="24" y="430.2" width="193.7" height="1.3" fill="#245a18" />
<rect x="217.6" y="214" width="0.7" height="217" fill="#2a6a1a" opacity=".55"/>
<clipPath id="cpcb"><rect x="23.5" y="212.6" width="194.2" height="217.6"/></clipPath><g clip-path="url(#cpcb)">
<g fill="none" stroke="#1f7d3a" stroke-linecap="round" stroke-linejoin="round">
<path d="M54.4 241V252L82 297V313L88 326H108" stroke-width="5.3"/>
<path d="M213.5 233.6H200L184.4 255.5L181.6 297L178.4 308V324L169.7 336.7" stroke-width="5.3"/>
<path d="M54 218.7H71" stroke-width="3.4"/>
<path d="M51.5 401L44.6 424" stroke-width="6"/>
<path d="M133.8 418.3L139.7 426.7" stroke-width="3.6"/>
<path d="M57.5 220V229L71 252" stroke-width="1.5"/>
<path d="M60.5 220V228L76.5 252" stroke-width="1.5"/>
<path d="M63.5 220V227L82 252" stroke-width="1.5"/>
<path d="M66.5 220V226L82 246" stroke-width="1.5"/>
<path d="M69.5 220V225L86 248" stroke-width="1.5"/>
<path d="M71 254V259" stroke-width="1.5"/>
<path d="M76.5 254V259" stroke-width="1.5"/>
<path d="M82 254V259" stroke-width="1.5"/>
<path d="M61 246V255L80.5 282" stroke-width="1.5"/>
<path d="M49.6 229.5V264L64.7 287" stroke-width="1.5"/>
<path d="M48 268L70.5 297" stroke-width="1.5"/>
<path d="M48 276L68 306V326" stroke-width="1.5"/>
<path d="M48 284L64 310V326" stroke-width="1.5"/>
<path d="M48 292L60 312V326" stroke-width="1.5"/>
<path d="M27.5 266.5H33" stroke-width="1.5"/>
<path d="M27.5 268.5H33" stroke-width="1.5"/>
<path d="M30 262V258" stroke-width="1.5"/>
<path d="M31 284V300" stroke-width="1.5"/>
<path d="M27.5 303.6H40L54.7 326" stroke-width="1.5"/>
<path d="M27.5 305.6H39L52 326" stroke-width="1.5"/>
<path d="M27.5 307.6H38L49.4 326" stroke-width="1.5"/>
<path d="M27.5 309.6H37L46.8 326" stroke-width="1.5"/>
<path d="M55.6 314V324" stroke-width="1.5"/>
<path d="M100 252V282" stroke-width="1.5"/>
<path d="M102.5 256V288" stroke-width="1.5"/>
<path d="M98 262V276" stroke-width="1.5"/>
<path d="M96.5 304V313" stroke-width="1.5"/>
<path d="M102 304V313" stroke-width="1.5"/>
<path d="M83.8 217V222" stroke-width="1.5"/>
<path d="M102 222.7V230" stroke-width="1.5"/>
<path d="M111 219V228L106 236V250" stroke-width="1.5"/>
<path d="M113.5 232V301L118 309V326" stroke-width="1.5"/>
<path d="M116.5 226V300L121 308V326" stroke-width="1.5"/>
<path d="M120 222V236L125.3 245V278" stroke-width="1.5"/>
<path d="M122.5 218V234L128 243V290L123.5 292.7" stroke-width="1.5"/>
<path d="M135.3 219.5V279L129 288V326" stroke-width="1.5"/>
<path d="M132 226V276L126 285V326" stroke-width="1.5"/>
<path d="M143.5 219.5V224.5L149.8 233.6V279L138 295.5V326" stroke-width="1.5"/>
<path d="M146.5 231V277L135 293V326" stroke-width="1.5"/>
<path d="M157 218.5V226.5L152.5 233.6V281L141.6 297V320" stroke-width="1.5"/>
<path d="M156.2 233.6V257" stroke-width="1.5"/>
<path d="M158 269H163.5L178 248" stroke-width="1.5"/>
<path d="M177 230V235.5L167 251.8V264.5L147 291.8V326" stroke-width="1.5"/>
<path d="M172.5 230V235L163.5 250V263L144.4 289V326" stroke-width="1.5"/>
<path d="M194 230L181 250" stroke-width="1.5"/>
<path d="M217 242.7H205L190.7 262.7L189 297L185 308V326" stroke-width="1.5"/>
<path d="M217 245.4H207L193.5 264L192.5 299L188 311V326" stroke-width="1.5"/>
<path d="M176 290V268" stroke-width="1.5"/>
<path d="M169 290H176" stroke-width="1.5"/>
<path d="M199.5 264.2H207" stroke-width="1.5"/>
<path d="M199.5 271.5H207" stroke-width="1.5"/>
<path d="M199.5 278.2H207" stroke-width="1.5"/>
<path d="M199.5 284.5H207" stroke-width="1.5"/>
<path d="M196 296V326" stroke-width="1.5"/>
<path d="M203.4 291.8L199 299V326" stroke-width="1.5"/>
<path d="M210.7 311.8V326" stroke-width="1.5"/>
<path d="M207 300H203" stroke-width="1.5"/>
<path d="M209 226.5H205" stroke-width="1.5"/>
<path d="M208.8 326V335L213 340H217" stroke-width="1.5"/>
<path d="M211.5 326V333.5L214.5 337.4H217" stroke-width="1.5"/>
<path d="M188.8 345H199.7L206.3 351.7H217" stroke-width="1.5"/>
<path d="M193.8 350H201L206 354.8H217" stroke-width="1.5"/>
<path d="M185.5 355.5H205L208.5 358H217" stroke-width="1.5"/>
<path d="M166.3 355.8L173 365H208L213 360.8H217" stroke-width="1.5"/>
<path d="M166.3 368.3H209L214 363.8H217" stroke-width="1.5"/>
<path d="M183 379H201.3L211.3 390H217" stroke-width="1.5"/>
<path d="M173.8 383.7H193L203 393.3H217" stroke-width="1.5"/>
<path d="M166.3 388.3H191.3L201.3 398.3H217" stroke-width="1.5"/>
<path d="M166.3 398.3H179.7" stroke-width="1.5"/>
<path d="M166.3 377.2H176" stroke-width="1.5"/>
<path d="M153 406.7H176.3L181.3 411.7H203L208.8 404.8" stroke-width="1.5"/>
<path d="M143 406.7L146.3 410.8H174.7L179.7 415H204.7L212.6 409" stroke-width="1.5"/>
<path d="M151.3 417.2H173L178 421.7H188L193 417.5H208L210.5 424" stroke-width="1.5"/>
<path d="M156 425.8L161 420" stroke-width="1.5"/>
<path d="M166 425L171 429" stroke-width="1.5"/>
<path d="M170 429H196" stroke-width="1.5"/>
<path d="M118 400H132V415H118" stroke-width="1.5"/>
<path d="M73.5 400V408.4L79.7 417.6" stroke-width="1.5"/>
<path d="M77.5 400V408.4L83.8 417.6" stroke-width="1.5"/>
<path d="M82 400V408.4L88.2 417.6" stroke-width="1.5"/>
<path d="M86 400V408.4L92.3 417.6" stroke-width="1.5"/>
<path d="M90 400V406L95 413" stroke-width="1.5"/>
<path d="M58.7 401V412" stroke-width="1.5"/>
<path d="M29.2 428.8H40L44 424" stroke-width="1.5"/>
<path d="M59.2 428.8H76L80 425" stroke-width="1.5"/>
<path d="M123 420.8V428" stroke-width="1.5"/>
<path d="M128.8 420.8V428" stroke-width="1.5"/>
<path d="M113 413H126" stroke-width="1.5"/>
<path d="M100 428.8H112L116 424" stroke-width="1.5"/>
<circle cx="161.6" cy="309.6" r="6.8" stroke-width="1.1"/><circle cx="161.6" cy="309.6" r="3.6" stroke-width="1.1"/>
</g>
<g fill="#31930f" stroke="#1f7d3a" stroke-width="1.1">
<circle cx="54.4" cy="240" r="1.55"/>
<circle cx="61" cy="244.5" r="1.55"/>
<circle cx="49.6" cy="228" r="1.55"/>
<circle cx="71" cy="253.6" r="1.55"/>
<circle cx="76.5" cy="253.6" r="1.55"/>
<circle cx="82" cy="253.6" r="1.55"/>
<circle cx="71" cy="260" r="1.55"/>
<circle cx="76.5" cy="260" r="1.55"/>
<circle cx="82" cy="260" r="1.55"/>
<circle cx="80.5" cy="283" r="1.55"/>
<circle cx="64.7" cy="288" r="1.55"/>
<circle cx="70.5" cy="298" r="1.55"/>
<circle cx="29.5" cy="260.5" r="1.55"/>
<circle cx="30.8" cy="283" r="1.55"/>
<circle cx="34" cy="216.5" r="1.55"/>
<circle cx="31" cy="230" r="1.55"/>
<circle cx="83.8" cy="217" r="1.55"/>
<circle cx="102" cy="222.7" r="1.55"/>
<circle cx="111" cy="219" r="1.55"/>
<circle cx="98" cy="277" r="1.55"/>
<circle cx="102.5" cy="289" r="1.55"/>
<circle cx="96.5" cy="313.6" r="1.55"/>
<circle cx="102" cy="313.6" r="1.55"/>
<circle cx="135.3" cy="218" r="1.55"/>
<circle cx="143.5" cy="218" r="1.55"/>
<circle cx="157" cy="217" r="1.55"/>
<circle cx="125.3" cy="279" r="1.55"/>
<circle cx="123.5" cy="292.7" r="1.55"/>
<circle cx="144.4" cy="278" r="1.55"/>
<circle cx="126" cy="231" r="1.55"/>
<circle cx="137.5" cy="232" r="1.55"/>
<circle cx="158" cy="269" r="1.55"/>
<circle cx="157" cy="294.5" r="1.55"/>
<circle cx="172.5" cy="297.3" r="1.55"/>
<circle cx="172.5" cy="308" r="1.55"/>
<circle cx="209" cy="226.5" r="1.55"/>
<circle cx="213.5" cy="233.6" r="1.55"/>
<circle cx="198" cy="264.2" r="1.55"/>
<circle cx="198" cy="271.5" r="1.55"/>
<circle cx="198" cy="278.2" r="1.55"/>
<circle cx="198" cy="284.5" r="1.55"/>
<circle cx="173.8" cy="346.7" r="1.55"/>
<circle cx="191.3" cy="370.8" r="1.55"/>
<circle cx="198" cy="370.8" r="1.55"/>
<circle cx="176.3" cy="377.2" r="1.55"/>
<circle cx="179.7" cy="398.3" r="1.55"/>
<circle cx="148" cy="402.5" r="1.55"/>
<circle cx="153" cy="406.7" r="1.55"/>
<circle cx="208.8" cy="404" r="1.55"/>
<circle cx="213" cy="408.3" r="1.55"/>
<circle cx="151.3" cy="417.2" r="1.55"/>
<circle cx="210.5" cy="425" r="1.55"/>
<circle cx="142" cy="416.7" r="1.55"/>
<circle cx="123" cy="420.8" r="1.55"/>
<circle cx="128.8" cy="420.8" r="1.55"/>
<circle cx="156" cy="425.8" r="1.55"/>
<circle cx="161" cy="424" r="1.55"/>
<circle cx="166" cy="425" r="1.55"/>
<circle cx="186" cy="330.8" r="1.55"/>
<circle cx="191" cy="332.5" r="1.55"/>
<circle cx="196" cy="328" r="1.55"/>
<circle cx="202" cy="332.5" r="1.55"/>
<circle cx="58.7" cy="413.8" r="1.55"/>
<circle cx="53.8" cy="419.6" r="1.55"/>
<circle cx="29.2" cy="428.8" r="1.55"/>
<circle cx="59.2" cy="428.8" r="1.55"/>
<circle cx="100" cy="428.8" r="1.55"/>
<circle cx="79.7" cy="418.7" r="1.2" stroke-width=".9"/>
<circle cx="79.7" cy="421.9" r="1.2" stroke-width=".9"/>
<circle cx="79.7" cy="425" r="1.2" stroke-width=".9"/>
<circle cx="83.8" cy="418.7" r="1.2" stroke-width=".9"/>
<circle cx="83.8" cy="421.9" r="1.2" stroke-width=".9"/>
<circle cx="83.8" cy="425" r="1.2" stroke-width=".9"/>
<circle cx="88.2" cy="418.7" r="1.2" stroke-width=".9"/>
<circle cx="88.2" cy="421.9" r="1.2" stroke-width=".9"/>
<circle cx="88.2" cy="425" r="1.2" stroke-width=".9"/>
<circle cx="92.3" cy="418.7" r="1.2" stroke-width=".9"/>
<circle cx="92.3" cy="421.9" r="1.2" stroke-width=".9"/>
<circle cx="92.3" cy="425" r="1.2" stroke-width=".9"/>
</g>
<g fill="#1f7d3a">
<circle cx="156.2" cy="258.7" r="1.9"/>
<circle cx="169" cy="290" r="1.9"/>
<circle cx="141.6" cy="321" r="1.9"/>
<circle cx="55.6" cy="313.6" r="1.9"/>
<circle cx="55.6" cy="324.5" r="1.9"/>
<circle cx="161.6" cy="309.6" r="1.9"/>
<circle cx="188.8" cy="345" r="1.9"/>
<circle cx="193.8" cy="350" r="1.9"/>
<circle cx="185.5" cy="355.5" r="1.9"/>
<circle cx="183" cy="379.2" r="1.9"/>
<circle cx="173.8" cy="383.7" r="1.9"/>
<circle cx="139.7" cy="406.7" r="1.9"/>
<rect x="207" y="262.7" width="7.4" height="8.3"/>
<rect x="207" y="276.4" width="7.4" height="10"/>
<rect x="207" y="289" width="7.4" height="10"/>
<rect x="207" y="301.8" width="7.4" height="10"/>
</g>
</g>
<path d="M250.5 198L241 212.6V338H308L318.3 332.8V198Z" fill="#c0c4c4"/>
<path d="M241 338L250.5 332.8H318.3L308 338Z" fill="#d2d4d4"/>
<rect x="250.5" y="198" width="67.8" height="134.8" fill="url(#gPsu)" />
<rect x="256.6" y="200.8" width="2.4" height="9.4" rx="1" fill="#0d0d0d"/>
<rect x="264.6" y="200.8" width="2.4" height="9.4" rx="1" fill="#0d0d0d"/>
<rect x="272.6" y="200.8" width="2.4" height="9.4" rx="1" fill="#0d0d0d"/>
<rect x="280.6" y="200.8" width="2.4" height="9.4" rx="1" fill="#0d0d0d"/>
<rect x="288.3" y="200.8" width="2.4" height="9.4" rx="1" fill="#0d0d0d"/>
<rect x="296" y="200.8" width="2.4" height="9.4" rx="1" fill="#0d0d0d"/>
<rect x="304" y="200.8" width="2.4" height="9.4" rx="1" fill="#0d0d0d"/>
<rect x="311.7" y="200.8" width="2.4" height="9.4" rx="1" fill="#0d0d0d"/>
<path d="M262.8 305.2V224.5a6.8 6.8 0 0 1 13.6 0V305.2a6.8 6.8 0 0 1 -13.6 0Z" fill="url(#gU)" opacity="1"/>
<path d="M265.40000000000003 305V225a4.2 4.2 0 0 1 8.4 0V305a4.2 4.2 0 0 1 -8.4 0Z" fill="#f6f7f7" opacity="1"/>
<path d="M288.8 305.2V224.5a6.8 6.8 0 0 1 13.6 0V305.2a6.8 6.8 0 0 1 -13.6 0Z" fill="url(#gU)" opacity="0.75"/>
<path d="M291.40000000000003 305V225a4.2 4.2 0 0 1 8.4 0V305a4.2 4.2 0 0 1 -8.4 0Z" fill="#f6f7f7" opacity="0.75"/>
<rect x="116" y="209.6" width="10.8" height="9" fill="#f4f4f4" stroke="#d0d0d0" stroke-width=".5"/>
<rect x="160" y="209.6" width="12.4" height="15" fill="#c9c5c5" />
<rect x="172.2" y="209.6" width="26.8" height="19.4" fill="#a6a6a6" />
<rect x="172.2" y="227.6" width="26.8" height="1.4" fill="#8a8a8a" />
<rect x="45.6" y="197.6" width="1.5" height="106" fill="#22382a" />
<rect x="37.5" y="198" width="8" height="38.2" fill="url(#gBrk)" />
<rect x="37.5" y="198" width="0.7" height="38.2" fill="#c8c4b8" />
<rect x="30.5" y="192.3" width="15" height="5.9" fill="#f2f0ea" stroke="#cfcfcf" stroke-width=".5"/>
<circle cx="34.8" cy="194.6" r="1" fill="#6a6a6a"/>
<rect x="34.9" y="238" width="9.2" height="58.6" rx=".8" fill="#333333"/>
<rect x="96.6" y="197.6" width="1.5" height="106" fill="#22382a" />
<rect x="88.5" y="198" width="8" height="38.2" fill="url(#gBrk)" />
<rect x="88.5" y="198" width="0.7" height="38.2" fill="#c8c4b8" />
<rect x="81.5" y="192.3" width="15" height="5.9" fill="#f2f0ea" stroke="#cfcfcf" stroke-width=".5"/>
<circle cx="85.8" cy="194.6" r="1" fill="#6a6a6a"/>
<rect x="85.9" y="238" width="9.2" height="58.6" rx=".8" fill="#333333"/>
<rect x="26" y="330" width="8.4" height="95.6" fill="url(#gDimmB)" />
<rect x="26" y="330" width="8.4" height="4" fill="#2a2a2a" />
<rect x="26" y="419.4" width="8.4" height="6.2" fill="#2a2a2a" />
<rect x="34.4" y="330" width="9" height="95.6" fill="url(#gDimm)" />
<rect x="34.4" y="330" width="9" height="4.6" fill="#e8ecec" />
<rect x="34.4" y="419.6" width="9" height="6" fill="#e2e6e6" />
<rect x="26" y="376.2" width="8.4" height="1.4" fill="#484848" />
<rect x="34.4" y="376.2" width="9" height="1.2" fill="#939b9b" />
<rect x="96" y="330" width="8.4" height="95.6" fill="url(#gDimmB)" />
<rect x="96" y="330" width="8.4" height="4" fill="#2a2a2a" />
<rect x="96" y="419.4" width="8.4" height="6.2" fill="#2a2a2a" />
<rect x="104.4" y="330" width="9" height="95.6" fill="url(#gDimm)" />
<rect x="104.4" y="330" width="9" height="4.6" fill="#e8ecec" />
<rect x="104.4" y="419.6" width="9" height="6" fill="#e2e6e6" />
<rect x="96" y="376.2" width="8.4" height="1.4" fill="#484848" />
<rect x="104.4" y="376.2" width="9" height="1.2" fill="#939b9b" />
<rect x="45.2" y="330.8" width="50.6" height="68.6" fill="url(#pFin)" />
<rect x="45.2" y="330.8" width="50.6" height="1" fill="#3c3834" opacity=".8"/>
<rect x="45.2" y="346.3" width="50.6" height="1.3" fill="#3e3a36" opacity=".85"/>
<rect x="45.2" y="381.7" width="50.6" height="1.3" fill="#3e3a36" opacity=".85"/>
<rect x="45.2" y="339.2" width="50.6" height="0.7" fill="#b8b0a8" opacity=".7"/>
<rect x="45.2" y="363.9" width="50.6" height="0.7" fill="#b0a8a0" opacity=".7"/>
<rect x="45.2" y="390.3" width="50.6" height="0.7" fill="#b8b0a8" opacity=".7"/>
<rect x="45.2" y="398.6" width="50.6" height="0.8" fill="#6a665f" opacity=".7"/>
<rect x="52" y="330.7" width="6.2" height="6.6" fill="#3c3c3a"/><circle cx="55.1" cy="334" r="2.3" fill="#dcdcdc"/><path d="M53.9 334h2.4M55.1 332.8v2.4" stroke="#666" stroke-width=".5"/>
<rect x="82.3" y="330.7" width="6.2" height="6.6" fill="#3c3c3a"/><circle cx="85.4" cy="334" r="2.3" fill="#dcdcdc"/><path d="M84.2 334h2.4M85.4 332.8v2.4" stroke="#666" stroke-width=".5"/>
<rect x="52" y="392.7" width="6.2" height="6.6" fill="#3c3c3a"/><circle cx="55.1" cy="396" r="2.3" fill="#dcdcdc"/><path d="M53.9 396h2.4M55.1 394.8v2.4" stroke="#666" stroke-width=".5"/>
<rect x="82.3" y="392.7" width="6.2" height="6.6" fill="#3c3c3a"/><circle cx="85.4" cy="396" r="2.3" fill="#dcdcdc"/><path d="M84.2 396h2.4M85.4 394.8v2.4" stroke="#666" stroke-width=".5"/>
<rect x="115" y="330.8" width="50.6" height="68.6" fill="url(#pFin2)" />
<rect x="115" y="330.8" width="50.6" height="1" fill="#3c3834" opacity=".8"/>
<rect x="115" y="346.3" width="50.6" height="1.3" fill="#3e3a36" opacity=".85"/>
<rect x="115" y="381.7" width="50.6" height="1.3" fill="#3e3a36" opacity=".85"/>
<rect x="115" y="339.2" width="50.6" height="0.7" fill="#b8b0a8" opacity=".7"/>
<rect x="115" y="363.9" width="50.6" height="0.7" fill="#b0a8a0" opacity=".7"/>
<rect x="115" y="390.3" width="50.6" height="0.7" fill="#b8b0a8" opacity=".7"/>
<rect x="115" y="398.6" width="50.6" height="0.8" fill="#6a665f" opacity=".7"/>
<rect x="121.8" y="330.7" width="6.2" height="6.6" fill="#3c3c3a"/><circle cx="124.9" cy="334" r="2.3" fill="#dcdcdc"/><path d="M123.7 334h2.4M124.9 332.8v2.4" stroke="#666" stroke-width=".5"/>
<rect x="152.1" y="330.7" width="6.2" height="6.6" fill="#3c3c3a"/><circle cx="155.2" cy="334" r="2.3" fill="#dcdcdc"/><path d="M154 334h2.4M155.2 332.8v2.4" stroke="#666" stroke-width=".5"/>
<rect x="121.8" y="392.7" width="6.2" height="6.6" fill="#3c3c3a"/><circle cx="124.9" cy="396" r="2.3" fill="#dcdcdc"/><path d="M123.7 396h2.4M124.9 394.8v2.4" stroke="#666" stroke-width=".5"/>
<rect x="152.1" y="392.7" width="6.2" height="6.6" fill="#3c3c3a"/><circle cx="155.2" cy="396" r="2.3" fill="#dcdcdc"/><path d="M154 396h2.4M155.2 394.8v2.4" stroke="#666" stroke-width=".5"/>
<rect x="60" y="316.8" width="21.6" height="6.9" fill="#e6d67a" />
<text x="70.8" y="322.9" font-family="Liberation Sans, sans-serif" font-size="7.2" text-anchor="middle" fill="#5a5210" textLength="18.4" lengthAdjust="spacingAndGlyphs">CPU0</text>
<rect x="160.2" y="316.8" width="22.2" height="6.9" fill="#e6d67a" />
<text x="171.3" y="322.9" font-family="Liberation Sans, sans-serif" font-size="7.2" text-anchor="middle" fill="#5a5210" textLength="18.4" lengthAdjust="spacingAndGlyphs">CPU1</text>
<rect x="12.1" y="442.4" width="10" height="27.2" fill="url(#gFanL)" />
<rect x="21" y="442.4" width="234" height="27.2" fill="#464646" />
<rect x="255" y="442.4" width="52.6" height="27.2" fill="#a9a9a9" />
<rect x="21" y="442.4" width="54.6" height="27.2" fill="#474747" />
<path d="M24.8 447.4H40.6L43.6 452V460L40.6 464.6H24.8L21.8 460V452Z" fill="url(#gFan)"/>
<rect x="22.4" y="453.6" width="20.6" height="0.9" fill="#555" />
<rect x="22.4" y="458.2" width="20.6" height="0.9" fill="#555" />
<path d="M56 447.4H71.8L74.8 452V460L71.8 464.6H56L53 460V452Z" fill="url(#gFan)"/>
<rect x="53.6" y="453.6" width="20.6" height="0.9" fill="#555" />
<rect x="53.6" y="458.2" width="20.6" height="0.9" fill="#555" />
<rect x="79.6" y="442.4" width="56.4" height="27.2" fill="#474747" />
<path d="M83.4 447.4H99.2L102.2 452V460L99.2 464.6H83.4L80.4 460V452Z" fill="url(#gFan)"/>
<rect x="81" y="453.6" width="20.6" height="0.9" fill="#555" />
<rect x="81" y="458.2" width="20.6" height="0.9" fill="#555" />
<path d="M116.4 447.4H132.2L135.2 452V460L132.2 464.6H116.4L113.4 460V452Z" fill="url(#gFan)"/>
<rect x="114" y="453.6" width="20.6" height="0.9" fill="#555" />
<rect x="114" y="458.2" width="20.6" height="0.9" fill="#555" />
<rect x="139.4" y="442.4" width="56" height="27.2" fill="#474747" />
<path d="M143.2 447.4H159L162 452V460L159 464.6H143.2L140.2 460V452Z" fill="url(#gFan)"/>
<rect x="140.8" y="453.6" width="20.6" height="0.9" fill="#555" />
<rect x="140.8" y="458.2" width="20.6" height="0.9" fill="#555" />
<path d="M175.8 447.4H191.6L194.6 452V460L191.6 464.6H175.8L172.8 460V452Z" fill="url(#gFan)"/>
<rect x="173.4" y="453.6" width="20.6" height="0.9" fill="#555" />
<rect x="173.4" y="458.2" width="20.6" height="0.9" fill="#555" />
<rect x="197.8" y="442.4" width="56.8" height="27.2" fill="#474747" />
<path d="M201.6 447.4H217.4L220.4 452V460L217.4 464.6H201.6L198.6 460V452Z" fill="url(#gFan)"/>
<rect x="199.2" y="453.6" width="20.6" height="0.9" fill="#555" />
<rect x="199.2" y="458.2" width="20.6" height="0.9" fill="#555" />
<path d="M235 447.4H250.8L253.8 452V460L250.8 464.6H235L232 460V452Z" fill="url(#gFan)"/>
<rect x="232.6" y="453.6" width="20.6" height="0.9" fill="#555" />
<rect x="232.6" y="458.2" width="20.6" height="0.9" fill="#555" />
<rect x="21" y="441.6" width="2.6" height="28.6" fill="#2e80ea" />
<rect x="73" y="441.6" width="2.6" height="28.6" fill="#2e80ea" />
<rect x="76.2" y="442.4" width="3.4" height="27.2" fill="#9c9c9c" />
<rect x="79.6" y="441.6" width="2.6" height="28.6" fill="#2e80ea" />
<rect x="133.4" y="441.6" width="2.6" height="28.6" fill="#2e80ea" />
<rect x="136" y="442.4" width="3.4" height="27.2" fill="#9c9c9c" />
<rect x="139.4" y="441.6" width="2.6" height="28.6" fill="#2e80ea" />
<rect x="192.8" y="441.6" width="2.6" height="28.6" fill="#2e80ea" />
<rect x="194.4" y="442.4" width="3.4" height="27.2" fill="#9c9c9c" />
<rect x="197.8" y="441.6" width="2.6" height="28.6" fill="#2e80ea" />
<rect x="252" y="441.6" width="2.6" height="28.6" fill="#2e80ea" />
<rect x="75.6" y="442.4" width="4" height="27.2" fill="#a0a0a0" />
<path d="M9.5 439.2L20 438.3H35L36.5 439.2H110L111 440.8H317.5V442.6H9.5Z" fill="url(#gRail)" stroke="#cfcfcf" stroke-width=".4"/>
<path d="M260 439.8L261 438.4H311.5L313 439.8H317.5V442.6H255V439.8Z" fill="#ececec" stroke="#cfcfcf" stroke-width=".4"/>
<path d="M9.5 469.4H317.5V472.6H311.6L310.6 473.8H18L17 472.6H9.5Z" fill="url(#gRail)" stroke="#cfcfcf" stroke-width=".4"/>
<rect x="7.3" y="474" width="16.2" height="24" fill="#c5c9c9" />
<rect x="7.3" y="474" width="2" height="24" fill="#b8bcbc" />
<path d="M57.6 498V494.4L59.6 492H64.6L66.6 494.4V498Z" fill="#3c3c3c"/>
<path d="M128.6 498V494.4L130.6 492H135.6L137.6 494.4V498Z" fill="#3c3c3c"/>
<path d="M200 498V494.4L202 492H207L209 494.4V498Z" fill="#3c3c3c"/>
<path d="M271 498V494.4L273 492H278L280 494.4V498Z" fill="#3c3c3c"/>
<rect x="8.2" y="498" width="312.5" height="3.1" fill="#8a9a3c" />
<rect x="7.8" y="501" width="315" height="17.2" fill="#333333" />
<rect x="10.2" y="503.2" width="3.6" height="15" fill="#f0f0f0" />
<rect x="318.2" y="503.2" width="2.6" height="15" fill="#f0f0f0" />
<rect x="7.3" y="518" width="315.4" height="108.4" fill="url(#gCover)" />
<rect x="7.3" y="518" width="0.9" height="108.4" fill="#c4c4c4" />
<rect x="321.8" y="518" width="0.9" height="108.4" fill="#c4c4c4" />
<path d="M54 518.6V511.2q0-1.6 1.6-1.6H90.4q1.6 0 1.6 1.6V518.6Z" fill="url(#gCover)"/>
<path d="M130 518.6V511.2q0-1.6 1.6-1.6H198.0q1.6 0 1.6 1.6V518.6Z" fill="url(#gCover)"/>
<path d="M239.8 518.6V511.2q0-1.6 1.6-1.6H276.0q1.6 0 1.6 1.6V518.6Z" fill="url(#gCover)"/>
<rect x="37" y="539.2" width="258.6" height="66.4" rx="5" fill="none" stroke="#eef0f0" stroke-width="2.8"/>
<circle cx="13" cy="538" r="1.2" fill="#707070"/><circle cx="13" cy="538" r="2" fill="none" stroke="#ffffff" stroke-width=".6" opacity=".8"/>
<circle cx="13" cy="575.5" r="1.2" fill="#707070"/><circle cx="13" cy="575.5" r="2" fill="none" stroke="#ffffff" stroke-width=".6" opacity=".8"/>
<circle cx="13" cy="619" r="1.2" fill="#707070"/><circle cx="13" cy="619" r="2" fill="none" stroke="#ffffff" stroke-width=".6" opacity=".8"/>
<circle cx="95" cy="619" r="1.2" fill="#707070"/><circle cx="95" cy="619" r="2" fill="none" stroke="#ffffff" stroke-width=".6" opacity=".8"/>
<circle cx="178" cy="619" r="1.2" fill="#707070"/><circle cx="178" cy="619" r="2" fill="none" stroke="#ffffff" stroke-width=".6" opacity=".8"/>
<circle cx="260" cy="619" r="1.2" fill="#707070"/><circle cx="260" cy="619" r="2" fill="none" stroke="#ffffff" stroke-width=".6" opacity=".8"/>
<circle cx="318" cy="619" r="1.2" fill="#707070"/><circle cx="318" cy="619" r="2" fill="none" stroke="#ffffff" stroke-width=".6" opacity=".8"/>
<circle cx="318" cy="575.5" r="1.2" fill="#707070"/><circle cx="318" cy="575.5" r="2" fill="none" stroke="#ffffff" stroke-width=".6" opacity=".8"/>
<circle cx="318" cy="538" r="1.2" fill="#707070"/><circle cx="318" cy="538" r="2" fill="none" stroke="#ffffff" stroke-width=".6" opacity=".8"/>
<rect x="4" y="625.8" width="323.4" height="1.9" fill="#2a2a2a" />
</g>
</svg>
<svg id="rt" width="1162" height="660" viewBox="0 0 1162 660" style="position:absolute;left:0;top:0" font-family='"Liberation Sans","Noto Sans CJK SC",sans-serif'>
<rect x="382" y="0" width="2.2" height="660" fill="#f0f0f0"/>
<rect x="401" y="33.7" width="761" height="1.3" fill="#cfdcf2"/>
<path d="M523.5 34V8.8H990.6V34" fill="#fff" stroke="#e2e4e8" stroke-width="1"/>
<path d="M602.3 8.8V34" stroke="#e2e4e8" stroke-width="1"/>
<path d="M680.4 8.8V34" stroke="#e2e4e8" stroke-width="1"/>
<path d="M757.9 8.8V34" stroke="#e2e4e8" stroke-width="1"/>
<path d="M835.8 8.8V34" stroke="#e2e4e8" stroke-width="1"/>
<path d="M913.4 8.8V34" stroke="#e2e4e8" stroke-width="1"/>
<path d="M757.9 35.4V8.8H835.8V35.4" fill="#fff" stroke="#cfdcf2" stroke-width="1.2"/>
<rect x="758.5" y="33" width="76.69999999999997" height="3" fill="#fff"/>
<rect x="1107.8" y="0.6" width="70" height="22.6" rx="2.5" fill="#fff" stroke="#dcdcdc" stroke-width="1"/>
<path d="M1162 56.6H401.3V257H1162" fill="none" stroke="#cfdcf2" stroke-width="1.2"/>
<rect x="401.3" y="213.6" width="761" height="1.2" fill="#cfdcf2"/>
<rect x="463" y="100.0" width="681" height="1" fill="#cfcfcf"/>
<rect x="463" y="126.0" width="681" height="1" fill="#cfcfcf"/>
<rect x="463" y="152.0" width="681" height="1" fill="#cfcfcf"/>
<path d="M463 113.1H732.4Q735.4 113.1 738.4 113.75L868.5 142.05Q871.5 142.7 874.5 142.7H1144V178.5H463Z" fill="#2d9cf4" fill-opacity=".148"/>
<path d="M463 118.7H732.4Q735.4 118.7 738.4 119.09L868.5 135.81Q871.5 136.2 874.5 136.2H1144V178.5H463Z" fill="#1ab394" fill-opacity=".127"/>
<rect x="463" y="126" width="335" height="1" fill="#9fb4b8" opacity=".25"/>
<rect x="463" y="152" width="681" height="1" fill="#9fb4b8" opacity=".25"/>
<path d="M463 118.7H732.4Q735.4 118.7 738.4 119.09L868.5 135.81Q871.5 136.2 874.5 136.2H1144" fill="none" stroke="#23b88f" stroke-width="1.9"/>
<path d="M463 113.1H732.4Q735.4 113.1 738.4 113.75L868.5 142.05Q871.5 142.7 874.5 142.7H1144" fill="none" stroke="#2d9cf4" stroke-width="1.9"/>
<rect x="463" y="178" width="681.5" height="1.3" fill="#555"/>
<rect x="462.5" y="178" width="1" height="5" fill="#555"/>
<rect x="598.7" y="178" width="1" height="5" fill="#555"/>
<rect x="734.9" y="178" width="1" height="5" fill="#555"/>
<rect x="871.1" y="178" width="1" height="5" fill="#555"/>
<rect x="1007.3" y="178" width="1" height="5" fill="#555"/>
<rect x="1143.5" y="178" width="1" height="5" fill="#555"/>
<text x="455.5" y="103.6" text-anchor="end" font-size="11.5" fill="#7d8dab">9Mb</text>
<text x="455.5" y="129.6" text-anchor="end" font-size="11.5" fill="#7d8dab">6Mb</text>
<text x="455.5" y="155.6" text-anchor="end" font-size="11.5" fill="#7d8dab">3Mb</text>
<text x="455.5" y="181.6" text-anchor="end" font-size="11.5" fill="#7d8dab">0</text>
<text x="463" y="194.2" text-anchor="middle" font-size="11" fill="#8695b0">08:30</text><text x="599.2" y="194.2" text-anchor="middle" font-size="11" fill="#8695b0">08:30</text><text x="735.4" y="194.2" text-anchor="middle" font-size="11" fill="#8695b0">08:30</text><text x="871.6" y="194.2" text-anchor="middle" font-size="11" fill="#8695b0">08:01</text><text x="1007.8" y="194.2" text-anchor="middle" font-size="11" fill="#8695b0">08:01</text><text x="1144" y="194.2" text-anchor="middle" font-size="11" fill="#8695b0">08:01</text>
<rect x="489" y="220.8" width="21.7" height="8.2" fill="#1cb894"/>
<rect x="620.6" y="220.8" width="21.7" height="8.2" fill="#2d9cf4"/>
<path d="M1162 267.6H401.3V660" fill="none" stroke="#cfdcf2" stroke-width="1.2"/>
<rect x="463" y="294.0" width="681" height="1" fill="#d4d4d4"/>
<rect x="463" y="333.0" width="681" height="1" fill="#d4d4d4"/>
<rect x="462.5" y="372.3" width="1" height="5" fill="#555"/>
<rect x="598.7" y="372.3" width="1" height="5" fill="#555"/>
<rect x="734.9" y="372.3" width="1" height="5" fill="#555"/>
<rect x="871.1" y="372.3" width="1" height="5" fill="#555"/>
<rect x="1007.3" y="372.3" width="1" height="5" fill="#555"/>
<rect x="1143.5" y="372.3" width="1" height="5" fill="#555"/>
<rect x="463" y="371.2" width="681.5" height="2.2" fill="#c265f5"/>
<text x="455.5" y="297.2" text-anchor="end" font-size="11.3" fill="#7d8dab">1Mb</text>
<text x="455.5" y="336.2" text-anchor="end" font-size="11.3" fill="#7d8dab">0.5Mb</text>
<text x="455.5" y="374.7" text-anchor="end" font-size="11.3" fill="#7d8dab">0</text>
<text x="463" y="387.4" text-anchor="middle" font-size="11" fill="#8695b0">09:48</text><text x="599.2" y="387.4" text-anchor="middle" font-size="11" fill="#8695b0">09:47</text><text x="735.4" y="387.4" text-anchor="middle" font-size="11" fill="#8695b0">09:30</text><text x="871.6" y="387.4" text-anchor="middle" font-size="11" fill="#8695b0">09:00</text><text x="1007.8" y="387.4" text-anchor="middle" font-size="11" fill="#8695b0">08:30</text><text x="1144" y="387.4" text-anchor="middle" font-size="11" fill="#8695b0">08:01</text>
<rect x="463" y="469.0" width="681" height="1" fill="#d4d4d4"/>
<rect x="463" y="508.0" width="681" height="1" fill="#d4d4d4"/>
<rect x="462.5" y="547.6" width="1" height="5" fill="#555"/>
<rect x="598.7" y="547.6" width="1" height="5" fill="#555"/>
<rect x="734.9" y="547.6" width="1" height="5" fill="#555"/>
<rect x="871.1" y="547.6" width="1" height="5" fill="#555"/>
<rect x="1007.3" y="547.6" width="1" height="5" fill="#555"/>
<rect x="1143.5" y="547.6" width="1" height="5" fill="#555"/>
<rect x="463" y="546.5" width="681.5" height="2.2" fill="#c265f5"/>
<text x="455.5" y="472.2" text-anchor="end" font-size="11.3" fill="#7d8dab">1Mb</text>
<text x="455.5" y="511.2" text-anchor="end" font-size="11.3" fill="#7d8dab">0.5Mb</text>
<text x="455.5" y="550.0" text-anchor="end" font-size="11.3" fill="#7d8dab">0</text>
<text x="463" y="563.4" text-anchor="middle" font-size="11" fill="#8695b0">09:48</text><text x="599.2" y="563.4" text-anchor="middle" font-size="11" fill="#8695b0">09:47</text><text x="735.4" y="563.4" text-anchor="middle" font-size="11" fill="#8695b0">09:30</text><text x="871.6" y="563.4" text-anchor="middle" font-size="11" fill="#8695b0">09:00</text><text x="1007.8" y="563.4" text-anchor="middle" font-size="11" fill="#8695b0">08:30</text><text x="1144" y="563.4" text-anchor="middle" font-size="11" fill="#8695b0">08:01</text>
<rect x="463" y="644.3" width="681" height="1" fill="#d4d4d4"/>
<text x="455.5" y="647.5" text-anchor="end" font-size="11.3" fill="#7d8dab">1Mb</text>
<rect x="401.3" y="407.4" width="761" height="1.2" fill="#cfdcf2"/>
<rect x="401.3" y="450.59999999999997" width="761" height="1.2" fill="#cfdcf2"/>
<rect x="401.3" y="582.3" width="761" height="1.2" fill="#cfdcf2"/>
<rect x="401.3" y="626.0" width="761" height="1.2" fill="#cfdcf2"/>
<rect x="785.8" y="408" width="1.2" height="43.2" fill="#cfdcf2"/>
<rect x="785.8" y="582.9" width="1.2" height="43.7" fill="#cfdcf2"/>
<rect x="419.95" y="226.65" width="19.3" height="19.4" rx="3.2" fill="#fff" stroke="#43b998" stroke-width="1.7"/><path d="M423.2 241.8V233.10000000000002H427.1V231.0Q427.1 230.4 427.7 230.4H431.6Q432.2 230.4 432.2 231.0V233.10000000000002H436.3V241.8Z" fill="#43b998"/><rect x="425.1" y="238.8" width="1.2" height="3" fill="#fff" opacity=".55"/><rect x="427.7" y="238.8" width="1.2" height="3" fill="#fff" opacity=".55"/><rect x="430.3" y="238.8" width="1.2" height="3" fill="#fff" opacity=".55"/><rect x="432.9" y="238.8" width="1.2" height="3" fill="#fff" opacity=".55"/>
<rect x="419.95" y="420.85" width="19.3" height="19.4" rx="3.2" fill="#fff" stroke="#d4d4d4" stroke-width="1.7"/><path d="M423.2 436V427.3H427.1V425.2Q427.1 424.6 427.7 424.6H431.6Q432.2 424.6 432.2 425.2V427.3H436.3V436Z" fill="#d6d6d6"/><rect x="425.1" y="433" width="1.2" height="3" fill="#fff" opacity=".55"/><rect x="427.7" y="433" width="1.2" height="3" fill="#fff" opacity=".55"/><rect x="430.3" y="433" width="1.2" height="3" fill="#fff" opacity=".55"/><rect x="432.9" y="433" width="1.2" height="3" fill="#fff" opacity=".55"/>
<rect x="805.95" y="420.85" width="19.3" height="19.4" rx="3.2" fill="#fff" stroke="#d4d4d4" stroke-width="1.7"/><path d="M809.2 436V427.3H813.1V425.2Q813.1 424.6 813.7 424.6H817.6Q818.2 424.6 818.2 425.2V427.3H822.3V436Z" fill="#d6d6d6"/><rect x="811.1" y="433" width="1.2" height="3" fill="#fff" opacity=".55"/><rect x="813.7" y="433" width="1.2" height="3" fill="#fff" opacity=".55"/><rect x="816.3" y="433" width="1.2" height="3" fill="#fff" opacity=".55"/><rect x="818.9" y="433" width="1.2" height="3" fill="#fff" opacity=".55"/>
<rect x="419.95" y="596.0500000000001" width="19.3" height="19.4" rx="3.2" fill="#fff" stroke="#d4d4d4" stroke-width="1.7"/><path d="M423.2 611.2V602.5H427.1V600.4000000000001Q427.1 599.8000000000001 427.7 599.8000000000001H431.6Q432.2 599.8000000000001 432.2 600.4000000000001V602.5H436.3V611.2Z" fill="#d6d6d6"/><rect x="425.1" y="608.2" width="1.2" height="3" fill="#fff" opacity=".55"/><rect x="427.7" y="608.2" width="1.2" height="3" fill="#fff" opacity=".55"/><rect x="430.3" y="608.2" width="1.2" height="3" fill="#fff" opacity=".55"/><rect x="432.9" y="608.2" width="1.2" height="3" fill="#fff" opacity=".55"/>
<rect x="805.95" y="596.0500000000001" width="19.3" height="19.4" rx="3.2" fill="#fff" stroke="#d4d4d4" stroke-width="1.7"/><path d="M809.2 611.2V602.5H813.1V600.4000000000001Q813.1 599.8000000000001 813.7 599.8000000000001H817.6Q818.2 599.8000000000001 818.2 600.4000000000001V602.5H822.3V611.2Z" fill="#d6d6d6"/><rect x="811.1" y="608.2" width="1.2" height="3" fill="#fff" opacity=".55"/><rect x="813.7" y="608.2" width="1.2" height="3" fill="#fff" opacity=".55"/><rect x="816.3" y="608.2" width="1.2" height="3" fill="#fff" opacity=".55"/><rect x="818.9" y="608.2" width="1.2" height="3" fill="#fff" opacity=".55"/>
</svg>
<div class="t title" style="left:401px;top:1px">k8s-node1详情</div>
<div class="t tab" style="left:523.8px;top:15px">CPU</div>
<div class="t tab" style="left:602.3px;top:15px">内存</div>
<div class="t tab" style="left:680.2px;top:15px">磁盘</div>
<div class="t tab act" style="left:757.8px;top:15px">网卡</div>
<div class="t tab" style="left:835.5px;top:15px">电源</div>
<div class="t tab" style="left:913px;top:15px">风扇</div>
<div class="t btn" style="left:1121.6px;top:5.2px">控制台</div>
<div class="t ptitle" style="left:419.6px;top:66px">管理网</div>
<div class="t nic" style="left:443.8px;top:228px">ens2f0</div>
<div class="t leg" style="left:513.4px;top:218.3px">流入速率：3.32Mb/s</div>
<div class="t leg" style="left:645px;top:218.3px">流出速率：3.17Mb/s</div>
<div class="t leg" style="left:489px;top:232.4px">speed：10000Mb/s</div>
<div class="t nic" style="left:443.8px;top:422.4px">enp3s0f1</div>
<div class="t org" style="left:501.8px;top:413.4px">流入速率：0Mb/s</div>
<div class="t org" style="left:594.4px;top:413.4px">流出速率：0Mb/s</div>
<div class="t org" style="left:501.8px;top:429.29999999999995px">speed：0Mb/s</div>
<div class="t nic" style="left:828.6px;top:422.4px">enp3s0f3</div>
<div class="t org" style="left:887.4px;top:413.4px">流入速率：0Mb/s</div>
<div class="t org" style="left:980.0px;top:413.4px">流出速率：0Mb/s</div>
<div class="t org" style="left:887.4px;top:429.29999999999995px">speed：0Mb/s</div>
<div class="t nic" style="left:443.8px;top:597.2px">enp5s0</div>
<div class="t org" style="left:492.2px;top:588.2px">流入速率：0Mb/s</div>
<div class="t org" style="left:584.8px;top:588.2px">流出速率：0Mb/s</div>
<div class="t org" style="left:492.2px;top:604.1px">speed：0Mb/s</div>
<div class="t nic" style="left:828.6px;top:597.2px">enp3s0f0</div>
<div class="t org" style="left:887.4px;top:588.2px">流入速率：0Mb/s</div>
<div class="t org" style="left:980.0px;top:588.2px">流出速率：0Mb/s</div>
<div class="t org" style="left:887.4px;top:604.1px">speed：0Mb/s</div>
<div class="t wm" style="left:1016px;top:628px"><span style="letter-spacing:-.6px">CSDN </span>@<span style="letter-spacing:.9px">杨林伟</span></div>
</body></html>
